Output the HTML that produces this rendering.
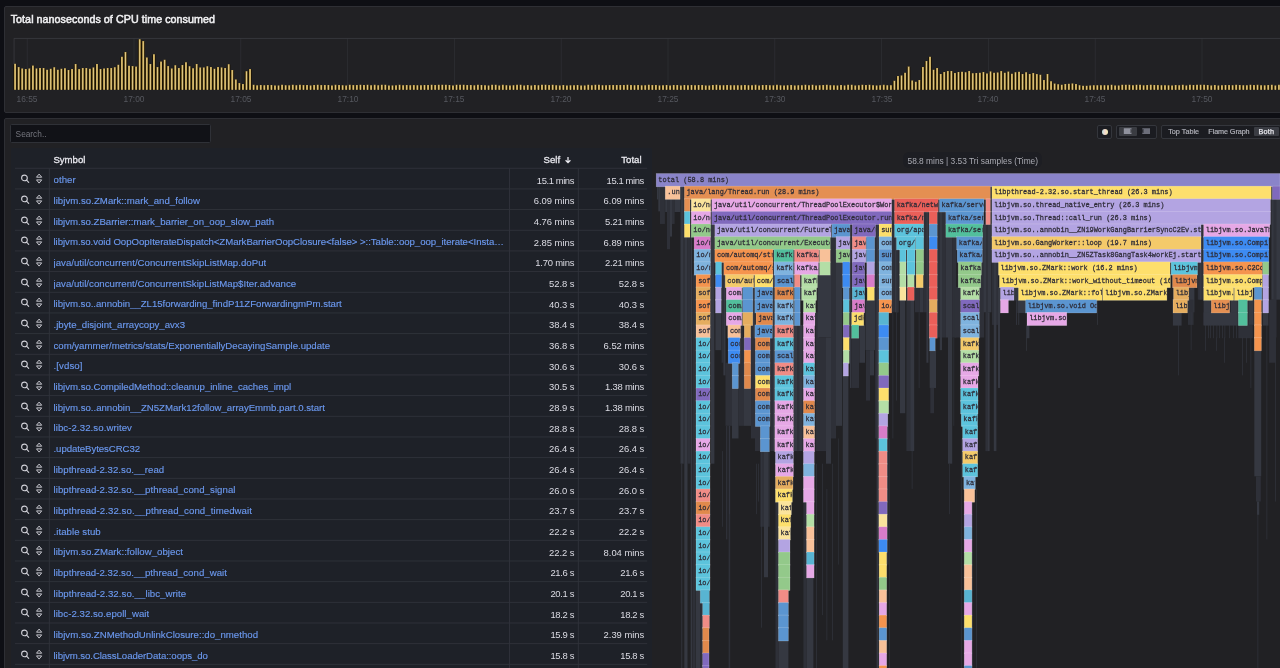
<!DOCTYPE html><html><head><meta charset="utf-8"><title>Pyroscope</title><style>
*{box-sizing:border-box;margin:0;padding:0}
html,body{width:1280px;height:668px;overflow:hidden;background:#0e0f14;font-family:"Liberation Sans",sans-serif;}
#root{position:absolute;left:0;top:0;width:1280px;height:668px;overflow:hidden;will-change:transform}
.abs{position:absolute}
.panel{position:absolute;background:#212124;border:1px solid #2e2f34;border-radius:2px}
.title{position:absolute;left:10.7px;top:12.3px;font-size:10.7px;color:#f1f1f3;letter-spacing:0.06px;white-space:nowrap;line-height:14px;-webkit-text-stroke:0.5px #f1f1f3}
.axl{position:absolute;top:93.6px;font-size:8.5px;color:#56585f;transform:translateX(-50%) scaleX(0.985);white-space:nowrap;line-height:10px}
.tbl{position:absolute;left:10.5px;top:147.5px;width:641.1px;height:521px;background:#1e2128}
.sym{position:absolute;left:53.5px;font-size:9.65px;color:#6b98ee;-webkit-text-stroke:0.15px #6b98ee;white-space:nowrap;line-height:12px;max-width:452px;overflow:hidden;text-overflow:ellipsis}
.num{position:absolute;font-size:9.45px;color:#dcdce4;white-space:nowrap;line-height:12px;text-align:right}
.th{position:absolute;font-size:9.6px;color:#e8e8ee;white-space:nowrap;line-height:12px;-webkit-text-stroke:0.3px #e8e8ee}
.btn{position:absolute;border:1px solid #34363c;border-radius:2px;background:#1b1c21}
.bt{position:absolute;font-size:7.25px;color:#b2b3bb;-webkit-text-stroke:0.18px #b2b3bb;white-space:nowrap;line-height:10px;top:126.75px}
</style></head><body><div id="root">
<div class="panel" style="left:4px;top:6px;width:1290px;height:107px"></div>
<div class="title">Total nanoseconds of CPU time consumed</div>
<svg class="abs" style="left:0;top:0" width="1280" height="112" viewBox="0 0 1280 112"><rect x="26.85" y="38.3" width="0.7" height="51.4" fill="#2f3035"/><rect x="133.65" y="38.3" width="0.7" height="51.4" fill="#2f3035"/><rect x="240.45" y="38.3" width="0.7" height="51.4" fill="#2f3035"/><rect x="347.25" y="38.3" width="0.7" height="51.4" fill="#2f3035"/><rect x="454.05" y="38.3" width="0.7" height="51.4" fill="#2f3035"/><rect x="560.85" y="38.3" width="0.7" height="51.4" fill="#2f3035"/><rect x="667.65" y="38.3" width="0.7" height="51.4" fill="#2f3035"/><rect x="774.45" y="38.3" width="0.7" height="51.4" fill="#2f3035"/><rect x="881.25" y="38.3" width="0.7" height="51.4" fill="#2f3035"/><rect x="988.05" y="38.3" width="0.7" height="51.4" fill="#2f3035"/><rect x="1094.85" y="38.3" width="0.7" height="51.4" fill="#2f3035"/><rect x="1201.65" y="38.3" width="0.7" height="51.4" fill="#2f3035"/><rect x="14.0" y="37.949999999999996" width="1270" height="0.8" fill="#3a3b40"/><rect x="13.65" y="38.3" width="0.8" height="51.4" fill="#3a3b40"/><path d="M13.30 89.7v-25.40h3.5v25.40zM16.86 89.7v-22.10h3.5v22.10zM20.42 89.7v-20.70h3.5v20.70zM23.98 89.7v-20.30h3.5v20.30zM27.54 89.7v-20.70h3.5v20.70zM31.10 89.7v-23.60h3.5v23.60zM34.66 89.7v-20.70h3.5v20.70zM38.22 89.7v-21.20h3.5v21.20zM41.78 89.7v-21.20h3.5v21.20zM45.34 89.7v-19.50h3.5v19.50zM48.90 89.7v-20.40h3.5v20.40zM52.46 89.7v-22.00h3.5v22.00zM56.02 89.7v-19.50h3.5v19.50zM59.58 89.7v-20.40h3.5v20.40zM63.14 89.7v-21.00h3.5v21.00zM66.70 89.7v-19.30h3.5v19.30zM70.26 89.7v-20.30h3.5v20.30zM73.82 89.7v-25.20h3.5v25.20zM77.38 89.7v-20.10h3.5v20.10zM80.94 89.7v-21.20h3.5v21.20zM84.50 89.7v-21.20h3.5v21.20zM88.06 89.7v-20.40h3.5v20.40zM91.62 89.7v-21.70h3.5v21.70zM95.18 89.7v-25.20h3.5v25.20zM98.74 89.7v-20.30h3.5v20.30zM102.30 89.7v-20.70h3.5v20.70zM105.86 89.7v-21.20h3.5v21.20zM109.42 89.7v-21.20h3.5v21.20zM112.98 89.7v-22.00h3.5v22.00zM116.54 89.7v-24.50h3.5v24.50zM120.10 89.7v-32.50h3.5v32.50zM123.66 89.7v-37.20h3.5v37.20zM127.22 89.7v-23.50h3.5v23.50zM130.78 89.7v-23.10h3.5v23.10zM134.34 89.7v-22.60h3.5v22.60zM137.90 89.7v-50.00h3.5v50.00zM141.46 89.7v-48.10h3.5v48.10zM145.02 89.7v-31.80h3.5v31.80zM148.58 89.7v-25.20h3.5v25.20zM152.14 89.7v-34.90h3.5v34.90zM155.70 89.7v-22.10h3.5v22.10zM159.26 89.7v-27.60h3.5v27.60zM162.82 89.7v-29.50h3.5v29.50zM166.38 89.7v-23.10h3.5v23.10zM169.94 89.7v-20.70h3.5v20.70zM173.50 89.7v-24.00h3.5v24.00zM177.06 89.7v-21.20h3.5v21.20zM180.62 89.7v-24.20h3.5v24.20zM184.18 89.7v-27.00h3.5v27.00zM187.74 89.7v-22.90h3.5v22.90zM191.30 89.7v-21.00h3.5v21.00zM194.86 89.7v-25.20h3.5v25.20zM198.42 89.7v-21.70h3.5v21.70zM201.98 89.7v-21.70h3.5v21.70zM205.54 89.7v-22.90h3.5v22.90zM209.10 89.7v-22.30h3.5v22.30zM212.66 89.7v-20.40h3.5v20.40zM216.22 89.7v-22.10h3.5v22.10zM219.78 89.7v-21.70h3.5v21.70zM223.34 89.7v-21.20h3.5v21.20zM226.90 89.7v-25.00h3.5v25.00zM230.46 89.7v-19.30h3.5v19.30zM234.02 89.7v-9.70h3.5v9.70zM237.58 89.7v-6.10h3.5v6.10zM241.14 89.7v-5.20h3.5v5.20zM244.70 89.7v-17.90h3.5v17.90zM248.26 89.7v-20.10h3.5v20.10zM251.82 89.7v-4.40h3.5v4.40zM255.38 89.7v-3.86h3.5v3.86zM258.94 89.7v-4.14h3.5v4.14zM262.50 89.7v-3.98h3.5v3.98zM266.06 89.7v-4.19h3.5v4.19zM269.62 89.7v-4.21h3.5v4.21zM273.18 89.7v-3.71h3.5v3.71zM276.74 89.7v-3.66h3.5v3.66zM280.30 89.7v-4.40h3.5v4.40zM283.86 89.7v-3.88h3.5v3.88zM287.42 89.7v-3.86h3.5v3.86zM290.98 89.7v-4.55h3.5v4.55zM294.54 89.7v-4.07h3.5v4.07zM298.10 89.7v-4.40h3.5v4.40zM301.66 89.7v-4.08h3.5v4.08zM305.22 89.7v-4.23h3.5v4.23zM308.78 89.7v-3.79h3.5v3.79zM312.34 89.7v-4.22h3.5v4.22zM315.90 89.7v-4.43h3.5v4.43zM319.46 89.7v-4.12h3.5v4.12zM323.02 89.7v-4.32h3.5v4.32zM326.58 89.7v-4.25h3.5v4.25zM330.14 89.7v-3.71h3.5v3.71zM333.70 89.7v-4.33h3.5v4.33zM337.26 89.7v-4.18h3.5v4.18zM340.82 89.7v-3.92h3.5v3.92zM344.38 89.7v-3.68h3.5v3.68zM347.94 89.7v-4.43h3.5v4.43zM351.50 89.7v-4.08h3.5v4.08zM355.06 89.7v-4.30h3.5v4.30zM358.62 89.7v-4.44h3.5v4.44zM362.18 89.7v-4.29h3.5v4.29zM365.74 89.7v-4.48h3.5v4.48zM369.30 89.7v-4.01h3.5v4.01zM372.86 89.7v-4.37h3.5v4.37zM376.42 89.7v-4.05h3.5v4.05zM379.98 89.7v-4.49h3.5v4.49zM383.54 89.7v-4.44h3.5v4.44zM387.10 89.7v-3.74h3.5v3.74zM390.66 89.7v-3.77h3.5v3.77zM394.22 89.7v-3.85h3.5v3.85zM397.78 89.7v-4.52h3.5v4.52zM401.34 89.7v-4.04h3.5v4.04zM404.90 89.7v-4.21h3.5v4.21zM408.46 89.7v-3.92h3.5v3.92zM412.02 89.7v-4.11h3.5v4.11zM415.58 89.7v-4.00h3.5v4.00zM419.14 89.7v-3.97h3.5v3.97zM422.70 89.7v-4.18h3.5v4.18zM426.26 89.7v-4.18h3.5v4.18zM429.82 89.7v-4.46h3.5v4.46zM433.38 89.7v-4.26h3.5v4.26zM436.94 89.7v-4.49h3.5v4.49zM440.50 89.7v-4.42h3.5v4.42zM444.06 89.7v-4.54h3.5v4.54zM447.62 89.7v-4.25h3.5v4.25zM451.18 89.7v-3.80h3.5v3.80zM454.74 89.7v-4.42h3.5v4.42zM458.30 89.7v-4.52h3.5v4.52zM461.86 89.7v-4.46h3.5v4.46zM465.42 89.7v-4.16h3.5v4.16zM468.98 89.7v-4.29h3.5v4.29zM472.54 89.7v-3.84h3.5v3.84zM476.10 89.7v-4.40h3.5v4.40zM479.66 89.7v-4.17h3.5v4.17zM483.22 89.7v-3.91h3.5v3.91zM486.78 89.7v-3.71h3.5v3.71zM490.34 89.7v-4.42h3.5v4.42zM493.90 89.7v-4.54h3.5v4.54zM497.46 89.7v-3.73h3.5v3.73zM501.02 89.7v-4.37h3.5v4.37zM504.58 89.7v-4.02h3.5v4.02zM508.14 89.7v-3.79h3.5v3.79zM511.70 89.7v-3.91h3.5v3.91zM515.26 89.7v-4.34h3.5v4.34zM518.82 89.7v-4.44h3.5v4.44zM522.38 89.7v-3.69h3.5v3.69zM525.94 89.7v-4.20h3.5v4.20zM529.50 89.7v-3.69h3.5v3.69zM533.06 89.7v-4.30h3.5v4.30zM536.62 89.7v-3.95h3.5v3.95zM540.18 89.7v-4.44h3.5v4.44zM543.74 89.7v-4.53h3.5v4.53zM547.30 89.7v-4.10h3.5v4.10zM550.86 89.7v-4.55h3.5v4.55zM554.42 89.7v-3.93h3.5v3.93zM557.98 89.7v-3.72h3.5v3.72zM561.54 89.7v-4.19h3.5v4.19zM565.10 89.7v-3.68h3.5v3.68zM568.66 89.7v-3.83h3.5v3.83zM572.22 89.7v-4.02h3.5v4.02zM575.78 89.7v-4.20h3.5v4.20zM579.34 89.7v-3.79h3.5v3.79zM582.90 89.7v-3.69h3.5v3.69zM586.46 89.7v-4.43h3.5v4.43zM590.02 89.7v-3.93h3.5v3.93zM593.58 89.7v-4.51h3.5v4.51zM597.14 89.7v-4.46h3.5v4.46zM600.70 89.7v-3.99h3.5v3.99zM604.26 89.7v-4.06h3.5v4.06zM607.82 89.7v-4.12h3.5v4.12zM611.38 89.7v-4.23h3.5v4.23zM614.94 89.7v-4.19h3.5v4.19zM618.50 89.7v-4.15h3.5v4.15zM622.06 89.7v-4.21h3.5v4.21zM625.62 89.7v-4.50h3.5v4.50zM629.18 89.7v-4.11h3.5v4.11zM632.74 89.7v-4.04h3.5v4.04zM636.30 89.7v-4.30h3.5v4.30zM639.86 89.7v-3.86h3.5v3.86zM643.42 89.7v-3.92h3.5v3.92zM646.98 89.7v-4.53h3.5v4.53zM650.54 89.7v-4.12h3.5v4.12zM654.10 89.7v-4.14h3.5v4.14zM657.66 89.7v-3.66h3.5v3.66zM661.22 89.7v-4.02h3.5v4.02zM664.78 89.7v-4.17h3.5v4.17zM668.34 89.7v-3.67h3.5v3.67zM671.90 89.7v-4.20h3.5v4.20zM675.46 89.7v-4.22h3.5v4.22zM679.02 89.7v-3.70h3.5v3.70zM682.58 89.7v-4.21h3.5v4.21zM686.14 89.7v-4.07h3.5v4.07zM689.70 89.7v-4.26h3.5v4.26zM693.26 89.7v-3.97h3.5v3.97zM696.82 89.7v-4.29h3.5v4.29zM700.38 89.7v-4.31h3.5v4.31zM703.94 89.7v-3.67h3.5v3.67zM707.50 89.7v-3.70h3.5v3.70zM711.06 89.7v-4.26h3.5v4.26zM714.62 89.7v-4.52h3.5v4.52zM718.18 89.7v-3.88h3.5v3.88zM721.74 89.7v-4.06h3.5v4.06zM725.30 89.7v-4.18h3.5v4.18zM728.86 89.7v-3.94h3.5v3.94zM732.42 89.7v-3.98h3.5v3.98zM735.98 89.7v-3.93h3.5v3.93zM739.54 89.7v-3.98h3.5v3.98zM743.10 89.7v-4.19h3.5v4.19zM746.66 89.7v-3.92h3.5v3.92zM750.22 89.7v-3.99h3.5v3.99zM753.78 89.7v-4.35h3.5v4.35zM757.34 89.7v-3.67h3.5v3.67zM760.90 89.7v-4.16h3.5v4.16zM764.46 89.7v-4.31h3.5v4.31zM768.02 89.7v-3.93h3.5v3.93zM771.58 89.7v-3.85h3.5v3.85zM775.14 89.7v-4.37h3.5v4.37zM778.70 89.7v-3.86h3.5v3.86zM782.26 89.7v-3.82h3.5v3.82zM785.82 89.7v-4.04h3.5v4.04zM789.38 89.7v-4.28h3.5v4.28zM792.94 89.7v-3.74h3.5v3.74zM796.50 89.7v-3.94h3.5v3.94zM800.06 89.7v-3.95h3.5v3.95zM803.62 89.7v-4.40h3.5v4.40zM807.18 89.7v-4.04h3.5v4.04zM810.74 89.7v-4.42h3.5v4.42zM814.30 89.7v-3.80h3.5v3.80zM817.86 89.7v-3.95h3.5v3.95zM821.42 89.7v-4.24h3.5v4.24zM824.98 89.7v-4.45h3.5v4.45zM828.54 89.7v-4.06h3.5v4.06zM832.10 89.7v-3.85h3.5v3.85zM835.66 89.7v-3.76h3.5v3.76zM839.22 89.7v-4.13h3.5v4.13zM842.78 89.7v-3.82h3.5v3.82zM846.34 89.7v-4.38h3.5v4.38zM849.90 89.7v-4.40h3.5v4.40zM853.46 89.7v-3.82h3.5v3.82zM857.02 89.7v-3.90h3.5v3.90zM860.58 89.7v-4.38h3.5v4.38zM864.14 89.7v-4.23h3.5v4.23zM867.70 89.7v-4.38h3.5v4.38zM871.26 89.7v-3.96h3.5v3.96zM874.82 89.7v-3.77h3.5v3.77zM878.38 89.7v-3.91h3.5v3.91zM881.94 89.7v-4.36h3.5v4.36zM885.50 89.7v-3.89h3.5v3.89zM889.06 89.7v-3.96h3.5v3.96zM892.62 89.7v-8.50h3.5v8.50zM896.18 89.7v-13.20h3.5v13.20zM899.74 89.7v-13.70h3.5v13.70zM903.30 89.7v-16.50h3.5v16.50zM906.86 89.7v-22.60h3.5v22.60zM910.42 89.7v-8.70h3.5v8.70zM913.98 89.7v-7.50h3.5v7.50zM917.54 89.7v-9.20h3.5v9.20zM921.10 89.7v-22.30h3.5v22.30zM924.66 89.7v-28.30h3.5v28.30zM928.22 89.7v-32.50h3.5v32.50zM931.78 89.7v-19.50h3.5v19.50zM935.34 89.7v-21.20h3.5v21.20zM938.90 89.7v-15.30h3.5v15.30zM942.46 89.7v-17.20h3.5v17.20zM946.02 89.7v-18.20h3.5v18.20zM949.58 89.7v-18.20h3.5v18.20zM953.14 89.7v-16.30h3.5v16.30zM956.70 89.7v-17.20h3.5v17.20zM960.26 89.7v-17.40h3.5v17.40zM963.82 89.7v-17.00h3.5v17.00zM967.38 89.7v-18.20h3.5v18.20zM970.94 89.7v-16.00h3.5v16.00zM974.50 89.7v-16.30h3.5v16.30zM978.06 89.7v-16.50h3.5v16.50zM981.62 89.7v-17.20h3.5v17.20zM985.18 89.7v-15.70h3.5v15.70zM988.74 89.7v-17.70h3.5v17.70zM992.30 89.7v-16.50h3.5v16.50zM995.86 89.7v-16.70h3.5v16.70zM999.42 89.7v-18.10h3.5v18.10zM1002.98 89.7v-16.50h3.5v16.50zM1006.54 89.7v-17.60h3.5v17.60zM1010.10 89.7v-15.50h3.5v15.50zM1013.66 89.7v-17.00h3.5v17.00zM1017.22 89.7v-17.40h3.5v17.40zM1020.78 89.7v-15.30h3.5v15.30zM1024.34 89.7v-17.00h3.5v17.00zM1027.90 89.7v-15.30h3.5v15.30zM1031.46 89.7v-16.30h3.5v16.30zM1035.02 89.7v-15.10h3.5v15.10zM1038.58 89.7v-14.40h3.5v14.40zM1042.14 89.7v-9.20h3.5v9.20zM1045.70 89.7v-15.30h3.5v15.30zM1049.26 89.7v-8.00h3.5v8.00zM1052.82 89.7v-5.60h3.5v5.60zM1056.38 89.7v-5.00h3.5v5.00zM1059.94 89.7v-4.50h3.5v4.50zM1063.50 89.7v-5.20h3.5v5.20zM1067.06 89.7v-5.40h3.5v5.40zM1070.62 89.7v-5.70h3.5v5.70zM1074.18 89.7v-5.20h3.5v5.20zM1077.74 89.7v-4.00h3.5v4.00zM1081.30 89.7v-3.50h3.5v3.50zM1084.86 89.7v-3.50h3.5v3.50zM1088.42 89.7v-3.70h3.5v3.70zM1091.98 89.7v-4.00h3.5v4.00zM1095.54 89.7v-4.00h3.5v4.00zM1099.10 89.7v-4.03h3.5v4.03zM1102.66 89.7v-4.03h3.5v4.03zM1106.22 89.7v-4.02h3.5v4.02zM1109.78 89.7v-4.48h3.5v4.48zM1113.34 89.7v-3.79h3.5v3.79zM1116.90 89.7v-3.65h3.5v3.65zM1120.46 89.7v-4.50h3.5v4.50zM1124.02 89.7v-4.44h3.5v4.44zM1127.58 89.7v-4.54h3.5v4.54zM1131.14 89.7v-4.04h3.5v4.04zM1134.70 89.7v-4.51h3.5v4.51zM1138.26 89.7v-4.48h3.5v4.48zM1141.82 89.7v-3.85h3.5v3.85zM1145.38 89.7v-4.32h3.5v4.32zM1148.94 89.7v-4.40h3.5v4.40zM1152.50 89.7v-4.25h3.5v4.25zM1156.06 89.7v-4.12h3.5v4.12zM1159.62 89.7v-3.91h3.5v3.91zM1163.18 89.7v-3.96h3.5v3.96zM1166.74 89.7v-3.85h3.5v3.85zM1170.30 89.7v-3.71h3.5v3.71zM1173.86 89.7v-4.18h3.5v4.18zM1177.42 89.7v-3.91h3.5v3.91zM1180.98 89.7v-4.38h3.5v4.38zM1184.54 89.7v-3.69h3.5v3.69zM1188.10 89.7v-4.46h3.5v4.46zM1191.66 89.7v-4.27h3.5v4.27zM1195.22 89.7v-4.48h3.5v4.48zM1198.78 89.7v-4.46h3.5v4.46zM1202.34 89.7v-4.46h3.5v4.46zM1205.90 89.7v-4.17h3.5v4.17zM1209.46 89.7v-3.66h3.5v3.66zM1213.02 89.7v-4.32h3.5v4.32zM1216.58 89.7v-3.80h3.5v3.80zM1220.14 89.7v-3.92h3.5v3.92zM1223.70 89.7v-4.25h3.5v4.25zM1227.26 89.7v-4.12h3.5v4.12zM1230.82 89.7v-4.02h3.5v4.02zM1234.38 89.7v-4.50h3.5v4.50zM1237.94 89.7v-4.20h3.5v4.20zM1241.50 89.7v-3.96h3.5v3.96zM1245.06 89.7v-3.88h3.5v3.88zM1248.62 89.7v-4.43h3.5v4.43zM1252.18 89.7v-4.08h3.5v4.08zM1255.74 89.7v-4.35h3.5v4.35zM1259.30 89.7v-3.97h3.5v3.97zM1262.86 89.7v-3.83h3.5v3.83zM1266.42 89.7v-4.13h3.5v4.13zM1269.98 89.7v-4.39h3.5v4.39zM1273.54 89.7v-3.80h3.5v3.80zM1277.10 89.7v-4.36h3.5v4.36zM1280.66 89.7v-4.48h3.5v4.48z" fill="#171003"/><path d="M14.15 89.7v-25.90h1.9v25.90zM17.71 89.7v-22.60h1.9v22.60zM21.27 89.7v-21.20h1.9v21.20zM24.83 89.7v-20.80h1.9v20.80zM28.39 89.7v-21.20h1.9v21.20zM31.95 89.7v-24.10h1.9v24.10zM35.51 89.7v-21.20h1.9v21.20zM39.07 89.7v-21.70h1.9v21.70zM42.63 89.7v-21.70h1.9v21.70zM46.19 89.7v-20.00h1.9v20.00zM49.75 89.7v-20.90h1.9v20.90zM53.31 89.7v-22.50h1.9v22.50zM56.87 89.7v-20.00h1.9v20.00zM60.43 89.7v-20.90h1.9v20.90zM63.99 89.7v-21.50h1.9v21.50zM67.55 89.7v-19.80h1.9v19.80zM71.11 89.7v-20.80h1.9v20.80zM74.67 89.7v-25.70h1.9v25.70zM78.23 89.7v-20.60h1.9v20.60zM81.79 89.7v-21.70h1.9v21.70zM85.35 89.7v-21.70h1.9v21.70zM88.91 89.7v-20.90h1.9v20.90zM92.47 89.7v-22.20h1.9v22.20zM96.03 89.7v-25.70h1.9v25.70zM99.59 89.7v-20.80h1.9v20.80zM103.15 89.7v-21.20h1.9v21.20zM106.71 89.7v-21.70h1.9v21.70zM110.27 89.7v-21.70h1.9v21.70zM113.83 89.7v-22.50h1.9v22.50zM117.39 89.7v-25.00h1.9v25.00zM120.95 89.7v-33.00h1.9v33.00zM124.51 89.7v-37.70h1.9v37.70zM128.07 89.7v-24.00h1.9v24.00zM131.63 89.7v-23.60h1.9v23.60zM135.19 89.7v-23.10h1.9v23.10zM138.75 89.7v-50.50h1.9v50.50zM142.31 89.7v-48.60h1.9v48.60zM145.87 89.7v-32.30h1.9v32.30zM149.43 89.7v-25.70h1.9v25.70zM152.99 89.7v-35.40h1.9v35.40zM156.55 89.7v-22.60h1.9v22.60zM160.11 89.7v-28.10h1.9v28.10zM163.67 89.7v-30.00h1.9v30.00zM167.23 89.7v-23.60h1.9v23.60zM170.79 89.7v-21.20h1.9v21.20zM174.35 89.7v-24.50h1.9v24.50zM177.91 89.7v-21.70h1.9v21.70zM181.47 89.7v-24.70h1.9v24.70zM185.03 89.7v-27.50h1.9v27.50zM188.59 89.7v-23.40h1.9v23.40zM192.15 89.7v-21.50h1.9v21.50zM195.71 89.7v-25.70h1.9v25.70zM199.27 89.7v-22.20h1.9v22.20zM202.83 89.7v-22.20h1.9v22.20zM206.39 89.7v-23.40h1.9v23.40zM209.95 89.7v-22.80h1.9v22.80zM213.51 89.7v-20.90h1.9v20.90zM217.07 89.7v-22.60h1.9v22.60zM220.63 89.7v-22.20h1.9v22.20zM224.19 89.7v-21.70h1.9v21.70zM227.75 89.7v-25.50h1.9v25.50zM231.31 89.7v-19.80h1.9v19.80zM234.87 89.7v-10.20h1.9v10.20zM238.43 89.7v-6.60h1.9v6.60zM241.99 89.7v-5.70h1.9v5.70zM245.55 89.7v-18.40h1.9v18.40zM249.11 89.7v-20.60h1.9v20.60zM252.67 89.7v-4.90h1.9v4.90zM256.23 89.7v-4.36h1.9v4.36zM259.79 89.7v-4.64h1.9v4.64zM263.35 89.7v-4.48h1.9v4.48zM266.91 89.7v-4.69h1.9v4.69zM270.47 89.7v-4.71h1.9v4.71zM274.03 89.7v-4.21h1.9v4.21zM277.59 89.7v-4.16h1.9v4.16zM281.15 89.7v-4.90h1.9v4.90zM284.71 89.7v-4.38h1.9v4.38zM288.27 89.7v-4.36h1.9v4.36zM291.83 89.7v-5.05h1.9v5.05zM295.39 89.7v-4.57h1.9v4.57zM298.95 89.7v-4.90h1.9v4.90zM302.51 89.7v-4.58h1.9v4.58zM306.07 89.7v-4.73h1.9v4.73zM309.63 89.7v-4.29h1.9v4.29zM313.19 89.7v-4.72h1.9v4.72zM316.75 89.7v-4.93h1.9v4.93zM320.31 89.7v-4.62h1.9v4.62zM323.87 89.7v-4.82h1.9v4.82zM327.43 89.7v-4.75h1.9v4.75zM330.99 89.7v-4.21h1.9v4.21zM334.55 89.7v-4.83h1.9v4.83zM338.11 89.7v-4.68h1.9v4.68zM341.67 89.7v-4.42h1.9v4.42zM345.23 89.7v-4.18h1.9v4.18zM348.79 89.7v-4.93h1.9v4.93zM352.35 89.7v-4.58h1.9v4.58zM355.91 89.7v-4.80h1.9v4.80zM359.47 89.7v-4.94h1.9v4.94zM363.03 89.7v-4.79h1.9v4.79zM366.59 89.7v-4.98h1.9v4.98zM370.15 89.7v-4.51h1.9v4.51zM373.71 89.7v-4.87h1.9v4.87zM377.27 89.7v-4.55h1.9v4.55zM380.83 89.7v-4.99h1.9v4.99zM384.39 89.7v-4.94h1.9v4.94zM387.95 89.7v-4.24h1.9v4.24zM391.51 89.7v-4.27h1.9v4.27zM395.07 89.7v-4.35h1.9v4.35zM398.63 89.7v-5.02h1.9v5.02zM402.19 89.7v-4.54h1.9v4.54zM405.75 89.7v-4.71h1.9v4.71zM409.31 89.7v-4.42h1.9v4.42zM412.87 89.7v-4.61h1.9v4.61zM416.43 89.7v-4.50h1.9v4.50zM419.99 89.7v-4.47h1.9v4.47zM423.55 89.7v-4.68h1.9v4.68zM427.11 89.7v-4.68h1.9v4.68zM430.67 89.7v-4.96h1.9v4.96zM434.23 89.7v-4.76h1.9v4.76zM437.79 89.7v-4.99h1.9v4.99zM441.35 89.7v-4.92h1.9v4.92zM444.91 89.7v-5.04h1.9v5.04zM448.47 89.7v-4.75h1.9v4.75zM452.03 89.7v-4.30h1.9v4.30zM455.59 89.7v-4.92h1.9v4.92zM459.15 89.7v-5.02h1.9v5.02zM462.71 89.7v-4.96h1.9v4.96zM466.27 89.7v-4.66h1.9v4.66zM469.83 89.7v-4.79h1.9v4.79zM473.39 89.7v-4.34h1.9v4.34zM476.95 89.7v-4.90h1.9v4.90zM480.51 89.7v-4.67h1.9v4.67zM484.07 89.7v-4.41h1.9v4.41zM487.63 89.7v-4.21h1.9v4.21zM491.19 89.7v-4.92h1.9v4.92zM494.75 89.7v-5.04h1.9v5.04zM498.31 89.7v-4.23h1.9v4.23zM501.87 89.7v-4.87h1.9v4.87zM505.43 89.7v-4.52h1.9v4.52zM508.99 89.7v-4.29h1.9v4.29zM512.55 89.7v-4.41h1.9v4.41zM516.11 89.7v-4.84h1.9v4.84zM519.67 89.7v-4.94h1.9v4.94zM523.23 89.7v-4.19h1.9v4.19zM526.79 89.7v-4.70h1.9v4.70zM530.35 89.7v-4.19h1.9v4.19zM533.91 89.7v-4.80h1.9v4.80zM537.47 89.7v-4.45h1.9v4.45zM541.03 89.7v-4.94h1.9v4.94zM544.59 89.7v-5.03h1.9v5.03zM548.15 89.7v-4.60h1.9v4.60zM551.71 89.7v-5.05h1.9v5.05zM555.27 89.7v-4.43h1.9v4.43zM558.83 89.7v-4.22h1.9v4.22zM562.39 89.7v-4.69h1.9v4.69zM565.95 89.7v-4.18h1.9v4.18zM569.51 89.7v-4.33h1.9v4.33zM573.07 89.7v-4.52h1.9v4.52zM576.63 89.7v-4.70h1.9v4.70zM580.19 89.7v-4.29h1.9v4.29zM583.75 89.7v-4.19h1.9v4.19zM587.31 89.7v-4.93h1.9v4.93zM590.87 89.7v-4.43h1.9v4.43zM594.43 89.7v-5.01h1.9v5.01zM597.99 89.7v-4.96h1.9v4.96zM601.55 89.7v-4.49h1.9v4.49zM605.11 89.7v-4.56h1.9v4.56zM608.67 89.7v-4.62h1.9v4.62zM612.23 89.7v-4.73h1.9v4.73zM615.79 89.7v-4.69h1.9v4.69zM619.35 89.7v-4.65h1.9v4.65zM622.91 89.7v-4.71h1.9v4.71zM626.47 89.7v-5.00h1.9v5.00zM630.03 89.7v-4.61h1.9v4.61zM633.59 89.7v-4.54h1.9v4.54zM637.15 89.7v-4.80h1.9v4.80zM640.71 89.7v-4.36h1.9v4.36zM644.27 89.7v-4.42h1.9v4.42zM647.83 89.7v-5.03h1.9v5.03zM651.39 89.7v-4.62h1.9v4.62zM654.95 89.7v-4.64h1.9v4.64zM658.51 89.7v-4.16h1.9v4.16zM662.07 89.7v-4.52h1.9v4.52zM665.63 89.7v-4.67h1.9v4.67zM669.19 89.7v-4.17h1.9v4.17zM672.75 89.7v-4.70h1.9v4.70zM676.31 89.7v-4.72h1.9v4.72zM679.87 89.7v-4.20h1.9v4.20zM683.43 89.7v-4.71h1.9v4.71zM686.99 89.7v-4.57h1.9v4.57zM690.55 89.7v-4.76h1.9v4.76zM694.11 89.7v-4.47h1.9v4.47zM697.67 89.7v-4.79h1.9v4.79zM701.23 89.7v-4.81h1.9v4.81zM704.79 89.7v-4.17h1.9v4.17zM708.35 89.7v-4.20h1.9v4.20zM711.91 89.7v-4.76h1.9v4.76zM715.47 89.7v-5.02h1.9v5.02zM719.03 89.7v-4.38h1.9v4.38zM722.59 89.7v-4.56h1.9v4.56zM726.15 89.7v-4.68h1.9v4.68zM729.71 89.7v-4.44h1.9v4.44zM733.27 89.7v-4.48h1.9v4.48zM736.83 89.7v-4.43h1.9v4.43zM740.39 89.7v-4.48h1.9v4.48zM743.95 89.7v-4.69h1.9v4.69zM747.51 89.7v-4.42h1.9v4.42zM751.07 89.7v-4.49h1.9v4.49zM754.63 89.7v-4.85h1.9v4.85zM758.19 89.7v-4.17h1.9v4.17zM761.75 89.7v-4.66h1.9v4.66zM765.31 89.7v-4.81h1.9v4.81zM768.87 89.7v-4.43h1.9v4.43zM772.43 89.7v-4.35h1.9v4.35zM775.99 89.7v-4.87h1.9v4.87zM779.55 89.7v-4.36h1.9v4.36zM783.11 89.7v-4.32h1.9v4.32zM786.67 89.7v-4.54h1.9v4.54zM790.23 89.7v-4.78h1.9v4.78zM793.79 89.7v-4.24h1.9v4.24zM797.35 89.7v-4.44h1.9v4.44zM800.91 89.7v-4.45h1.9v4.45zM804.47 89.7v-4.90h1.9v4.90zM808.03 89.7v-4.54h1.9v4.54zM811.59 89.7v-4.92h1.9v4.92zM815.15 89.7v-4.30h1.9v4.30zM818.71 89.7v-4.45h1.9v4.45zM822.27 89.7v-4.74h1.9v4.74zM825.83 89.7v-4.95h1.9v4.95zM829.39 89.7v-4.56h1.9v4.56zM832.95 89.7v-4.35h1.9v4.35zM836.51 89.7v-4.26h1.9v4.26zM840.07 89.7v-4.63h1.9v4.63zM843.63 89.7v-4.32h1.9v4.32zM847.19 89.7v-4.88h1.9v4.88zM850.75 89.7v-4.90h1.9v4.90zM854.31 89.7v-4.32h1.9v4.32zM857.87 89.7v-4.40h1.9v4.40zM861.43 89.7v-4.88h1.9v4.88zM864.99 89.7v-4.73h1.9v4.73zM868.55 89.7v-4.88h1.9v4.88zM872.11 89.7v-4.46h1.9v4.46zM875.67 89.7v-4.27h1.9v4.27zM879.23 89.7v-4.41h1.9v4.41zM882.79 89.7v-4.86h1.9v4.86zM886.35 89.7v-4.39h1.9v4.39zM889.91 89.7v-4.46h1.9v4.46zM893.47 89.7v-9.00h1.9v9.00zM897.03 89.7v-13.70h1.9v13.70zM900.59 89.7v-14.20h1.9v14.20zM904.15 89.7v-17.00h1.9v17.00zM907.71 89.7v-23.10h1.9v23.10zM911.27 89.7v-9.20h1.9v9.20zM914.83 89.7v-8.00h1.9v8.00zM918.39 89.7v-9.70h1.9v9.70zM921.95 89.7v-22.80h1.9v22.80zM925.51 89.7v-28.80h1.9v28.80zM929.07 89.7v-33.00h1.9v33.00zM932.63 89.7v-20.00h1.9v20.00zM936.19 89.7v-21.70h1.9v21.70zM939.75 89.7v-15.80h1.9v15.80zM943.31 89.7v-17.70h1.9v17.70zM946.87 89.7v-18.70h1.9v18.70zM950.43 89.7v-18.70h1.9v18.70zM953.99 89.7v-16.80h1.9v16.80zM957.55 89.7v-17.70h1.9v17.70zM961.11 89.7v-17.90h1.9v17.90zM964.67 89.7v-17.50h1.9v17.50zM968.23 89.7v-18.70h1.9v18.70zM971.79 89.7v-16.50h1.9v16.50zM975.35 89.7v-16.80h1.9v16.80zM978.91 89.7v-17.00h1.9v17.00zM982.47 89.7v-17.70h1.9v17.70zM986.03 89.7v-16.20h1.9v16.20zM989.59 89.7v-18.20h1.9v18.20zM993.15 89.7v-17.00h1.9v17.00zM996.71 89.7v-17.20h1.9v17.20zM1000.27 89.7v-18.60h1.9v18.60zM1003.83 89.7v-17.00h1.9v17.00zM1007.39 89.7v-18.10h1.9v18.10zM1010.95 89.7v-16.00h1.9v16.00zM1014.51 89.7v-17.50h1.9v17.50zM1018.07 89.7v-17.90h1.9v17.90zM1021.63 89.7v-15.80h1.9v15.80zM1025.19 89.7v-17.50h1.9v17.50zM1028.75 89.7v-15.80h1.9v15.80zM1032.31 89.7v-16.80h1.9v16.80zM1035.87 89.7v-15.60h1.9v15.60zM1039.43 89.7v-14.90h1.9v14.90zM1042.99 89.7v-9.70h1.9v9.70zM1046.55 89.7v-15.80h1.9v15.80zM1050.11 89.7v-8.50h1.9v8.50zM1053.67 89.7v-6.10h1.9v6.10zM1057.23 89.7v-5.50h1.9v5.50zM1060.79 89.7v-5.00h1.9v5.00zM1064.35 89.7v-5.70h1.9v5.70zM1067.91 89.7v-5.90h1.9v5.90zM1071.47 89.7v-6.20h1.9v6.20zM1075.03 89.7v-5.70h1.9v5.70zM1078.59 89.7v-4.50h1.9v4.50zM1082.15 89.7v-4.00h1.9v4.00zM1085.71 89.7v-4.00h1.9v4.00zM1089.27 89.7v-4.20h1.9v4.20zM1092.83 89.7v-4.50h1.9v4.50zM1096.39 89.7v-4.50h1.9v4.50zM1099.95 89.7v-4.53h1.9v4.53zM1103.51 89.7v-4.53h1.9v4.53zM1107.07 89.7v-4.52h1.9v4.52zM1110.63 89.7v-4.98h1.9v4.98zM1114.19 89.7v-4.29h1.9v4.29zM1117.75 89.7v-4.15h1.9v4.15zM1121.31 89.7v-5.00h1.9v5.00zM1124.87 89.7v-4.94h1.9v4.94zM1128.43 89.7v-5.04h1.9v5.04zM1131.99 89.7v-4.54h1.9v4.54zM1135.55 89.7v-5.01h1.9v5.01zM1139.11 89.7v-4.98h1.9v4.98zM1142.67 89.7v-4.35h1.9v4.35zM1146.23 89.7v-4.82h1.9v4.82zM1149.79 89.7v-4.90h1.9v4.90zM1153.35 89.7v-4.75h1.9v4.75zM1156.91 89.7v-4.62h1.9v4.62zM1160.47 89.7v-4.41h1.9v4.41zM1164.03 89.7v-4.46h1.9v4.46zM1167.59 89.7v-4.35h1.9v4.35zM1171.15 89.7v-4.21h1.9v4.21zM1174.71 89.7v-4.68h1.9v4.68zM1178.27 89.7v-4.41h1.9v4.41zM1181.83 89.7v-4.88h1.9v4.88zM1185.39 89.7v-4.19h1.9v4.19zM1188.95 89.7v-4.96h1.9v4.96zM1192.51 89.7v-4.77h1.9v4.77zM1196.07 89.7v-4.98h1.9v4.98zM1199.63 89.7v-4.96h1.9v4.96zM1203.19 89.7v-4.96h1.9v4.96zM1206.75 89.7v-4.67h1.9v4.67zM1210.31 89.7v-4.16h1.9v4.16zM1213.87 89.7v-4.82h1.9v4.82zM1217.43 89.7v-4.30h1.9v4.30zM1220.99 89.7v-4.42h1.9v4.42zM1224.55 89.7v-4.75h1.9v4.75zM1228.11 89.7v-4.62h1.9v4.62zM1231.67 89.7v-4.52h1.9v4.52zM1235.23 89.7v-5.00h1.9v5.00zM1238.79 89.7v-4.70h1.9v4.70zM1242.35 89.7v-4.46h1.9v4.46zM1245.91 89.7v-4.38h1.9v4.38zM1249.47 89.7v-4.93h1.9v4.93zM1253.03 89.7v-4.58h1.9v4.58zM1256.59 89.7v-4.85h1.9v4.85zM1260.15 89.7v-4.47h1.9v4.47zM1263.71 89.7v-4.33h1.9v4.33zM1267.27 89.7v-4.63h1.9v4.63zM1270.83 89.7v-4.89h1.9v4.89zM1274.39 89.7v-4.30h1.9v4.30zM1277.95 89.7v-4.86h1.9v4.86zM1281.51 89.7v-4.98h1.9v4.98z" fill="#bf9c43"/><path d="M14.65 89.7v-25.60h0.9v25.60zM18.21 89.7v-22.30h0.9v22.30zM21.77 89.7v-20.90h0.9v20.90zM25.33 89.7v-20.50h0.9v20.50zM28.89 89.7v-20.90h0.9v20.90zM32.45 89.7v-23.80h0.9v23.80zM36.01 89.7v-20.90h0.9v20.90zM39.57 89.7v-21.40h0.9v21.40zM43.13 89.7v-21.40h0.9v21.40zM46.69 89.7v-19.70h0.9v19.70zM50.25 89.7v-20.60h0.9v20.60zM53.81 89.7v-22.20h0.9v22.20zM57.37 89.7v-19.70h0.9v19.70zM60.93 89.7v-20.60h0.9v20.60zM64.49 89.7v-21.20h0.9v21.20zM68.05 89.7v-19.50h0.9v19.50zM71.61 89.7v-20.50h0.9v20.50zM75.17 89.7v-25.40h0.9v25.40zM78.73 89.7v-20.30h0.9v20.30zM82.29 89.7v-21.40h0.9v21.40zM85.85 89.7v-21.40h0.9v21.40zM89.41 89.7v-20.60h0.9v20.60zM92.97 89.7v-21.90h0.9v21.90zM96.53 89.7v-25.40h0.9v25.40zM100.09 89.7v-20.50h0.9v20.50zM103.65 89.7v-20.90h0.9v20.90zM107.21 89.7v-21.40h0.9v21.40zM110.77 89.7v-21.40h0.9v21.40zM114.33 89.7v-22.20h0.9v22.20zM117.89 89.7v-24.70h0.9v24.70zM121.45 89.7v-32.70h0.9v32.70zM125.01 89.7v-37.40h0.9v37.40zM128.57 89.7v-23.70h0.9v23.70zM132.13 89.7v-23.30h0.9v23.30zM135.69 89.7v-22.80h0.9v22.80zM139.25 89.7v-50.20h0.9v50.20zM142.81 89.7v-48.30h0.9v48.30zM146.37 89.7v-32.00h0.9v32.00zM149.93 89.7v-25.40h0.9v25.40zM153.49 89.7v-35.10h0.9v35.10zM157.05 89.7v-22.30h0.9v22.30zM160.61 89.7v-27.80h0.9v27.80zM164.17 89.7v-29.70h0.9v29.70zM167.73 89.7v-23.30h0.9v23.30zM171.29 89.7v-20.90h0.9v20.90zM174.85 89.7v-24.20h0.9v24.20zM178.41 89.7v-21.40h0.9v21.40zM181.97 89.7v-24.40h0.9v24.40zM185.53 89.7v-27.20h0.9v27.20zM189.09 89.7v-23.10h0.9v23.10zM192.65 89.7v-21.20h0.9v21.20zM196.21 89.7v-25.40h0.9v25.40zM199.77 89.7v-21.90h0.9v21.90zM203.33 89.7v-21.90h0.9v21.90zM206.89 89.7v-23.10h0.9v23.10zM210.45 89.7v-22.50h0.9v22.50zM214.01 89.7v-20.60h0.9v20.60zM217.57 89.7v-22.30h0.9v22.30zM221.13 89.7v-21.90h0.9v21.90zM224.69 89.7v-21.40h0.9v21.40zM228.25 89.7v-25.20h0.9v25.20zM231.81 89.7v-19.50h0.9v19.50zM235.37 89.7v-9.90h0.9v9.90zM238.93 89.7v-6.30h0.9v6.30zM242.49 89.7v-5.40h0.9v5.40zM246.05 89.7v-18.10h0.9v18.10zM249.61 89.7v-20.30h0.9v20.30zM253.17 89.7v-4.60h0.9v4.60zM256.73 89.7v-4.06h0.9v4.06zM260.29 89.7v-4.34h0.9v4.34zM263.85 89.7v-4.18h0.9v4.18zM267.41 89.7v-4.39h0.9v4.39zM270.97 89.7v-4.41h0.9v4.41zM274.53 89.7v-3.91h0.9v3.91zM278.09 89.7v-3.86h0.9v3.86zM281.65 89.7v-4.60h0.9v4.60zM285.21 89.7v-4.08h0.9v4.08zM288.77 89.7v-4.06h0.9v4.06zM292.33 89.7v-4.75h0.9v4.75zM295.89 89.7v-4.27h0.9v4.27zM299.45 89.7v-4.60h0.9v4.60zM303.01 89.7v-4.28h0.9v4.28zM306.57 89.7v-4.43h0.9v4.43zM310.13 89.7v-3.99h0.9v3.99zM313.69 89.7v-4.42h0.9v4.42zM317.25 89.7v-4.63h0.9v4.63zM320.81 89.7v-4.32h0.9v4.32zM324.37 89.7v-4.52h0.9v4.52zM327.93 89.7v-4.45h0.9v4.45zM331.49 89.7v-3.91h0.9v3.91zM335.05 89.7v-4.53h0.9v4.53zM338.61 89.7v-4.38h0.9v4.38zM342.17 89.7v-4.12h0.9v4.12zM345.73 89.7v-3.88h0.9v3.88zM349.29 89.7v-4.63h0.9v4.63zM352.85 89.7v-4.28h0.9v4.28zM356.41 89.7v-4.50h0.9v4.50zM359.97 89.7v-4.64h0.9v4.64zM363.53 89.7v-4.49h0.9v4.49zM367.09 89.7v-4.68h0.9v4.68zM370.65 89.7v-4.21h0.9v4.21zM374.21 89.7v-4.57h0.9v4.57zM377.77 89.7v-4.25h0.9v4.25zM381.33 89.7v-4.69h0.9v4.69zM384.89 89.7v-4.64h0.9v4.64zM388.45 89.7v-3.94h0.9v3.94zM392.01 89.7v-3.97h0.9v3.97zM395.57 89.7v-4.05h0.9v4.05zM399.13 89.7v-4.72h0.9v4.72zM402.69 89.7v-4.24h0.9v4.24zM406.25 89.7v-4.41h0.9v4.41zM409.81 89.7v-4.12h0.9v4.12zM413.37 89.7v-4.31h0.9v4.31zM416.93 89.7v-4.20h0.9v4.20zM420.49 89.7v-4.17h0.9v4.17zM424.05 89.7v-4.38h0.9v4.38zM427.61 89.7v-4.38h0.9v4.38zM431.17 89.7v-4.66h0.9v4.66zM434.73 89.7v-4.46h0.9v4.46zM438.29 89.7v-4.69h0.9v4.69zM441.85 89.7v-4.62h0.9v4.62zM445.41 89.7v-4.74h0.9v4.74zM448.97 89.7v-4.45h0.9v4.45zM452.53 89.7v-4.00h0.9v4.00zM456.09 89.7v-4.62h0.9v4.62zM459.65 89.7v-4.72h0.9v4.72zM463.21 89.7v-4.66h0.9v4.66zM466.77 89.7v-4.36h0.9v4.36zM470.33 89.7v-4.49h0.9v4.49zM473.89 89.7v-4.04h0.9v4.04zM477.45 89.7v-4.60h0.9v4.60zM481.01 89.7v-4.37h0.9v4.37zM484.57 89.7v-4.11h0.9v4.11zM488.13 89.7v-3.91h0.9v3.91zM491.69 89.7v-4.62h0.9v4.62zM495.25 89.7v-4.74h0.9v4.74zM498.81 89.7v-3.93h0.9v3.93zM502.37 89.7v-4.57h0.9v4.57zM505.93 89.7v-4.22h0.9v4.22zM509.49 89.7v-3.99h0.9v3.99zM513.05 89.7v-4.11h0.9v4.11zM516.61 89.7v-4.54h0.9v4.54zM520.17 89.7v-4.64h0.9v4.64zM523.73 89.7v-3.89h0.9v3.89zM527.29 89.7v-4.40h0.9v4.40zM530.85 89.7v-3.89h0.9v3.89zM534.41 89.7v-4.50h0.9v4.50zM537.97 89.7v-4.15h0.9v4.15zM541.53 89.7v-4.64h0.9v4.64zM545.09 89.7v-4.73h0.9v4.73zM548.65 89.7v-4.30h0.9v4.30zM552.21 89.7v-4.75h0.9v4.75zM555.77 89.7v-4.13h0.9v4.13zM559.33 89.7v-3.92h0.9v3.92zM562.89 89.7v-4.39h0.9v4.39zM566.45 89.7v-3.88h0.9v3.88zM570.01 89.7v-4.03h0.9v4.03zM573.57 89.7v-4.22h0.9v4.22zM577.13 89.7v-4.40h0.9v4.40zM580.69 89.7v-3.99h0.9v3.99zM584.25 89.7v-3.89h0.9v3.89zM587.81 89.7v-4.63h0.9v4.63zM591.37 89.7v-4.13h0.9v4.13zM594.93 89.7v-4.71h0.9v4.71zM598.49 89.7v-4.66h0.9v4.66zM602.05 89.7v-4.19h0.9v4.19zM605.61 89.7v-4.26h0.9v4.26zM609.17 89.7v-4.32h0.9v4.32zM612.73 89.7v-4.43h0.9v4.43zM616.29 89.7v-4.39h0.9v4.39zM619.85 89.7v-4.35h0.9v4.35zM623.41 89.7v-4.41h0.9v4.41zM626.97 89.7v-4.70h0.9v4.70zM630.53 89.7v-4.31h0.9v4.31zM634.09 89.7v-4.24h0.9v4.24zM637.65 89.7v-4.50h0.9v4.50zM641.21 89.7v-4.06h0.9v4.06zM644.77 89.7v-4.12h0.9v4.12zM648.33 89.7v-4.73h0.9v4.73zM651.89 89.7v-4.32h0.9v4.32zM655.45 89.7v-4.34h0.9v4.34zM659.01 89.7v-3.86h0.9v3.86zM662.57 89.7v-4.22h0.9v4.22zM666.13 89.7v-4.37h0.9v4.37zM669.69 89.7v-3.87h0.9v3.87zM673.25 89.7v-4.40h0.9v4.40zM676.81 89.7v-4.42h0.9v4.42zM680.37 89.7v-3.90h0.9v3.90zM683.93 89.7v-4.41h0.9v4.41zM687.49 89.7v-4.27h0.9v4.27zM691.05 89.7v-4.46h0.9v4.46zM694.61 89.7v-4.17h0.9v4.17zM698.17 89.7v-4.49h0.9v4.49zM701.73 89.7v-4.51h0.9v4.51zM705.29 89.7v-3.87h0.9v3.87zM708.85 89.7v-3.90h0.9v3.90zM712.41 89.7v-4.46h0.9v4.46zM715.97 89.7v-4.72h0.9v4.72zM719.53 89.7v-4.08h0.9v4.08zM723.09 89.7v-4.26h0.9v4.26zM726.65 89.7v-4.38h0.9v4.38zM730.21 89.7v-4.14h0.9v4.14zM733.77 89.7v-4.18h0.9v4.18zM737.33 89.7v-4.13h0.9v4.13zM740.89 89.7v-4.18h0.9v4.18zM744.45 89.7v-4.39h0.9v4.39zM748.01 89.7v-4.12h0.9v4.12zM751.57 89.7v-4.19h0.9v4.19zM755.13 89.7v-4.55h0.9v4.55zM758.69 89.7v-3.87h0.9v3.87zM762.25 89.7v-4.36h0.9v4.36zM765.81 89.7v-4.51h0.9v4.51zM769.37 89.7v-4.13h0.9v4.13zM772.93 89.7v-4.05h0.9v4.05zM776.49 89.7v-4.57h0.9v4.57zM780.05 89.7v-4.06h0.9v4.06zM783.61 89.7v-4.02h0.9v4.02zM787.17 89.7v-4.24h0.9v4.24zM790.73 89.7v-4.48h0.9v4.48zM794.29 89.7v-3.94h0.9v3.94zM797.85 89.7v-4.14h0.9v4.14zM801.41 89.7v-4.15h0.9v4.15zM804.97 89.7v-4.60h0.9v4.60zM808.53 89.7v-4.24h0.9v4.24zM812.09 89.7v-4.62h0.9v4.62zM815.65 89.7v-4.00h0.9v4.00zM819.21 89.7v-4.15h0.9v4.15zM822.77 89.7v-4.44h0.9v4.44zM826.33 89.7v-4.65h0.9v4.65zM829.89 89.7v-4.26h0.9v4.26zM833.45 89.7v-4.05h0.9v4.05zM837.01 89.7v-3.96h0.9v3.96zM840.57 89.7v-4.33h0.9v4.33zM844.13 89.7v-4.02h0.9v4.02zM847.69 89.7v-4.58h0.9v4.58zM851.25 89.7v-4.60h0.9v4.60zM854.81 89.7v-4.02h0.9v4.02zM858.37 89.7v-4.10h0.9v4.10zM861.93 89.7v-4.58h0.9v4.58zM865.49 89.7v-4.43h0.9v4.43zM869.05 89.7v-4.58h0.9v4.58zM872.61 89.7v-4.16h0.9v4.16zM876.17 89.7v-3.97h0.9v3.97zM879.73 89.7v-4.11h0.9v4.11zM883.29 89.7v-4.56h0.9v4.56zM886.85 89.7v-4.09h0.9v4.09zM890.41 89.7v-4.16h0.9v4.16zM893.97 89.7v-8.70h0.9v8.70zM897.53 89.7v-13.40h0.9v13.40zM901.09 89.7v-13.90h0.9v13.90zM904.65 89.7v-16.70h0.9v16.70zM908.21 89.7v-22.80h0.9v22.80zM911.77 89.7v-8.90h0.9v8.90zM915.33 89.7v-7.70h0.9v7.70zM918.89 89.7v-9.40h0.9v9.40zM922.45 89.7v-22.50h0.9v22.50zM926.01 89.7v-28.50h0.9v28.50zM929.57 89.7v-32.70h0.9v32.70zM933.13 89.7v-19.70h0.9v19.70zM936.69 89.7v-21.40h0.9v21.40zM940.25 89.7v-15.50h0.9v15.50zM943.81 89.7v-17.40h0.9v17.40zM947.37 89.7v-18.40h0.9v18.40zM950.93 89.7v-18.40h0.9v18.40zM954.49 89.7v-16.50h0.9v16.50zM958.05 89.7v-17.40h0.9v17.40zM961.61 89.7v-17.60h0.9v17.60zM965.17 89.7v-17.20h0.9v17.20zM968.73 89.7v-18.40h0.9v18.40zM972.29 89.7v-16.20h0.9v16.20zM975.85 89.7v-16.50h0.9v16.50zM979.41 89.7v-16.70h0.9v16.70zM982.97 89.7v-17.40h0.9v17.40zM986.53 89.7v-15.90h0.9v15.90zM990.09 89.7v-17.90h0.9v17.90zM993.65 89.7v-16.70h0.9v16.70zM997.21 89.7v-16.90h0.9v16.90zM1000.77 89.7v-18.30h0.9v18.30zM1004.33 89.7v-16.70h0.9v16.70zM1007.89 89.7v-17.80h0.9v17.80zM1011.45 89.7v-15.70h0.9v15.70zM1015.01 89.7v-17.20h0.9v17.20zM1018.57 89.7v-17.60h0.9v17.60zM1022.13 89.7v-15.50h0.9v15.50zM1025.69 89.7v-17.20h0.9v17.20zM1029.25 89.7v-15.50h0.9v15.50zM1032.81 89.7v-16.50h0.9v16.50zM1036.37 89.7v-15.30h0.9v15.30zM1039.93 89.7v-14.60h0.9v14.60zM1043.49 89.7v-9.40h0.9v9.40zM1047.05 89.7v-15.50h0.9v15.50zM1050.61 89.7v-8.20h0.9v8.20zM1054.17 89.7v-5.80h0.9v5.80zM1057.73 89.7v-5.20h0.9v5.20zM1061.29 89.7v-4.70h0.9v4.70zM1064.85 89.7v-5.40h0.9v5.40zM1068.41 89.7v-5.60h0.9v5.60zM1071.97 89.7v-5.90h0.9v5.90zM1075.53 89.7v-5.40h0.9v5.40zM1079.09 89.7v-4.20h0.9v4.20zM1082.65 89.7v-3.70h0.9v3.70zM1086.21 89.7v-3.70h0.9v3.70zM1089.77 89.7v-3.90h0.9v3.90zM1093.33 89.7v-4.20h0.9v4.20zM1096.89 89.7v-4.20h0.9v4.20zM1100.45 89.7v-4.23h0.9v4.23zM1104.01 89.7v-4.23h0.9v4.23zM1107.57 89.7v-4.22h0.9v4.22zM1111.13 89.7v-4.68h0.9v4.68zM1114.69 89.7v-3.99h0.9v3.99zM1118.25 89.7v-3.85h0.9v3.85zM1121.81 89.7v-4.70h0.9v4.70zM1125.37 89.7v-4.64h0.9v4.64zM1128.93 89.7v-4.74h0.9v4.74zM1132.49 89.7v-4.24h0.9v4.24zM1136.05 89.7v-4.71h0.9v4.71zM1139.61 89.7v-4.68h0.9v4.68zM1143.17 89.7v-4.05h0.9v4.05zM1146.73 89.7v-4.52h0.9v4.52zM1150.29 89.7v-4.60h0.9v4.60zM1153.85 89.7v-4.45h0.9v4.45zM1157.41 89.7v-4.32h0.9v4.32zM1160.97 89.7v-4.11h0.9v4.11zM1164.53 89.7v-4.16h0.9v4.16zM1168.09 89.7v-4.05h0.9v4.05zM1171.65 89.7v-3.91h0.9v3.91zM1175.21 89.7v-4.38h0.9v4.38zM1178.77 89.7v-4.11h0.9v4.11zM1182.33 89.7v-4.58h0.9v4.58zM1185.89 89.7v-3.89h0.9v3.89zM1189.45 89.7v-4.66h0.9v4.66zM1193.01 89.7v-4.47h0.9v4.47zM1196.57 89.7v-4.68h0.9v4.68zM1200.13 89.7v-4.66h0.9v4.66zM1203.69 89.7v-4.66h0.9v4.66zM1207.25 89.7v-4.37h0.9v4.37zM1210.81 89.7v-3.86h0.9v3.86zM1214.37 89.7v-4.52h0.9v4.52zM1217.93 89.7v-4.00h0.9v4.00zM1221.49 89.7v-4.12h0.9v4.12zM1225.05 89.7v-4.45h0.9v4.45zM1228.61 89.7v-4.32h0.9v4.32zM1232.17 89.7v-4.22h0.9v4.22zM1235.73 89.7v-4.70h0.9v4.70zM1239.29 89.7v-4.40h0.9v4.40zM1242.85 89.7v-4.16h0.9v4.16zM1246.41 89.7v-4.08h0.9v4.08zM1249.97 89.7v-4.63h0.9v4.63zM1253.53 89.7v-4.28h0.9v4.28zM1257.09 89.7v-4.55h0.9v4.55zM1260.65 89.7v-4.17h0.9v4.17zM1264.21 89.7v-4.03h0.9v4.03zM1267.77 89.7v-4.33h0.9v4.33zM1271.33 89.7v-4.59h0.9v4.59zM1274.89 89.7v-4.00h0.9v4.00zM1278.45 89.7v-4.56h0.9v4.56zM1282.01 89.7v-4.68h0.9v4.68z" fill="#e2cc8e"/></svg>
<div class="axl" style="left:27.2px">16:55</div>
<div class="axl" style="left:134.0px">17:00</div>
<div class="axl" style="left:240.8px">17:05</div>
<div class="axl" style="left:347.6px">17:10</div>
<div class="axl" style="left:454.4px">17:15</div>
<div class="axl" style="left:561.2px">17:20</div>
<div class="axl" style="left:668.0px">17:25</div>
<div class="axl" style="left:774.8px">17:30</div>
<div class="axl" style="left:881.6px">17:35</div>
<div class="axl" style="left:988.4px">17:40</div>
<div class="axl" style="left:1095.2px">17:45</div>
<div class="axl" style="left:1202.0px">17:50</div>
<div class="panel" style="left:4px;top:118.4px;width:1290px;height:560px"></div>
<div class="abs" style="left:10.2px;top:124.3px;width:201.2px;height:18.3px;background:#111217;border:1px solid #2f3137;border-radius:1.5px"></div>
<div class="abs" style="left:15.6px;top:129px;font-size:8.3px;color:#75767e;line-height:10px">Search..</div>
<div class="btn" style="left:1097.2px;top:124.7px;width:15.2px;height:14.3px"></div>
<div class="abs" style="left:1101.6px;top:128.5px;width:6.2px;height:6.2px;border-radius:50%;background:linear-gradient(90deg,#b9e0dc,#f1d9d2 45%,#f6ddc4 60%,#f1efb4)"></div>
<div class="btn" style="left:1116.4px;top:124.7px;width:40.6px;height:14.3px"></div>
<div class="abs" style="left:1118.8px;top:126.7px;width:17.8px;height:9.8px;background:#3a3c42;border-radius:1px"></div>
<svg class="abs" style="left:1120px;top:126.35px" width="34" height="11" viewBox="0 0 34 11"><path d="M3.8 2.3h7.7v1.3h-1.5v0.95h1.2v1.05h-1.2v0.95h1.5v1.35h-7.7z" fill="#8f919d"/><path d="M30 2.3h-7.7v1.3h1.5v0.95h-1.2v1.05h1.2v0.95h-1.5v1.35h7.7z" fill="#6c6e7a"/></svg>
<div class="btn" style="left:1161.2px;top:124.7px;width:120.2px;height:14.3px"></div>
<div class="abs" style="left:1254px;top:126.7px;width:24.8px;height:9.8px;background:#3a3c43;border-radius:1px"></div>
<div class="bt" style="left:1168.2px">Top Table</div>
<div class="bt" style="left:1208.3px;letter-spacing:-0.1px">Flame Graph</div>
<div class="bt" style="left:1258.6px;color:#e6e6ec;-webkit-text-stroke:0.25px #e6e6ec;letter-spacing:0.15px">Both</div>
<div class="tbl"></div>
<svg class="abs" style="left:0;top:0" width="660" height="668" viewBox="0 0 660 668"><rect x="48.85" y="168.3" width="0.9" height="500" fill="#30333b"/><rect x="509.05" y="168.3" width="0.9" height="500" fill="#30333b"/><rect x="577.85" y="168.3" width="0.9" height="500" fill="#30333b"/><rect x="15" y="167.80" width="632.2" height="0.9" fill="#30333b"/><rect x="15" y="188.47" width="632.2" height="0.9" fill="#30333b"/><rect x="15" y="209.14" width="632.2" height="0.9" fill="#30333b"/><rect x="15" y="229.81" width="632.2" height="0.9" fill="#30333b"/><rect x="15" y="250.48" width="632.2" height="0.9" fill="#30333b"/><rect x="15" y="271.15" width="632.2" height="0.9" fill="#30333b"/><rect x="15" y="291.82" width="632.2" height="0.9" fill="#30333b"/><rect x="15" y="312.49" width="632.2" height="0.9" fill="#30333b"/><rect x="15" y="333.16" width="632.2" height="0.9" fill="#30333b"/><rect x="15" y="353.83" width="632.2" height="0.9" fill="#30333b"/><rect x="15" y="374.50" width="632.2" height="0.9" fill="#30333b"/><rect x="15" y="395.17" width="632.2" height="0.9" fill="#30333b"/><rect x="15" y="415.84" width="632.2" height="0.9" fill="#30333b"/><rect x="15" y="436.51" width="632.2" height="0.9" fill="#30333b"/><rect x="15" y="457.18" width="632.2" height="0.9" fill="#30333b"/><rect x="15" y="477.85" width="632.2" height="0.9" fill="#30333b"/><rect x="15" y="498.52" width="632.2" height="0.9" fill="#30333b"/><rect x="15" y="519.19" width="632.2" height="0.9" fill="#30333b"/><rect x="15" y="539.86" width="632.2" height="0.9" fill="#30333b"/><rect x="15" y="560.53" width="632.2" height="0.9" fill="#30333b"/><rect x="15" y="581.20" width="632.2" height="0.9" fill="#30333b"/><rect x="15" y="601.87" width="632.2" height="0.9" fill="#30333b"/><rect x="15" y="622.54" width="632.2" height="0.9" fill="#30333b"/><rect x="15" y="643.21" width="632.2" height="0.9" fill="#30333b"/><rect x="15" y="663.88" width="632.2" height="0.9" fill="#30333b"/></svg>
<div class="th" style="left:53.4px;top:154.4px">Symbol</div>
<div class="th" style="left:543.6px;top:154.4px">Self</div>
<svg class="abs" style="left:563.6px;top:156.2px" width="8" height="8" viewBox="0 0 8 8"><path d="M4 1v5.6M1.6 4.3L4 6.7l2.4-2.4" stroke="#ececf2" stroke-width="1.25" fill="none"/></svg>
<div class="th" style="left:621.3px;top:154.4px">Total</div>
<svg class="abs" style="left:20px;top:173.25px" width="11" height="11" viewBox="0 0 11 11"><circle cx="4.45" cy="4.95" r="2.85" stroke="#cfcfd6" stroke-width="1.1" fill="none"/><path d="M6.55 7.05L8.7 9.3" stroke="#cfcfd6" stroke-width="1.1" stroke-linecap="round"/></svg>
<svg class="abs" style="left:35px;top:173.25px" width="9" height="12" viewBox="0 0 9 12"><path d="M4.1 1.1L1.5 4.2H6.7ZM4.1 10.1L1.5 6.9H6.7Z" stroke="#cfcfd6" stroke-width="0.95" fill="none" stroke-linejoin="round"/></svg>
<div class="sym" style="top:174.25px;letter-spacing:0.069px">other</div>
<div class="num" style="right:706.01px;top:174.65px;letter-spacing:-0.413px">15.1 mins</div>
<div class="num" style="right:636.21px;top:174.65px;letter-spacing:-0.413px">15.1 mins</div>
<svg class="abs" style="left:20px;top:193.92px" width="11" height="11" viewBox="0 0 11 11"><circle cx="4.45" cy="4.95" r="2.85" stroke="#cfcfd6" stroke-width="1.1" fill="none"/><path d="M6.55 7.05L8.7 9.3" stroke="#cfcfd6" stroke-width="1.1" stroke-linecap="round"/></svg>
<svg class="abs" style="left:35px;top:193.92px" width="9" height="12" viewBox="0 0 9 12"><path d="M4.1 1.1L1.5 4.2H6.7ZM4.1 10.1L1.5 6.9H6.7Z" stroke="#cfcfd6" stroke-width="0.95" fill="none" stroke-linejoin="round"/></svg>
<div class="sym" style="top:194.92px;letter-spacing:0.031px">libjvm.so.ZMark::mark_and_follow</div>
<div class="num" style="right:705.64px;top:195.32px;letter-spacing:-0.036px">6.09 mins</div>
<div class="num" style="right:635.84px;top:195.32px;letter-spacing:-0.036px">6.09 mins</div>
<svg class="abs" style="left:20px;top:214.59px" width="11" height="11" viewBox="0 0 11 11"><circle cx="4.45" cy="4.95" r="2.85" stroke="#cfcfd6" stroke-width="1.1" fill="none"/><path d="M6.55 7.05L8.7 9.3" stroke="#cfcfd6" stroke-width="1.1" stroke-linecap="round"/></svg>
<svg class="abs" style="left:35px;top:214.59px" width="9" height="12" viewBox="0 0 9 12"><path d="M4.1 1.1L1.5 4.2H6.7ZM4.1 10.1L1.5 6.9H6.7Z" stroke="#cfcfd6" stroke-width="0.95" fill="none" stroke-linejoin="round"/></svg>
<div class="sym" style="top:215.59px;letter-spacing:-0.009px">libjvm.so.ZBarrier::mark_barrier_on_oop_slow_path</div>
<div class="num" style="right:705.64px;top:215.99px;letter-spacing:-0.036px">4.76 mins</div>
<div class="num" style="right:636.02px;top:215.99px;letter-spacing:-0.224px">5.21 mins</div>
<svg class="abs" style="left:20px;top:235.26px" width="11" height="11" viewBox="0 0 11 11"><circle cx="4.45" cy="4.95" r="2.85" stroke="#cfcfd6" stroke-width="1.1" fill="none"/><path d="M6.55 7.05L8.7 9.3" stroke="#cfcfd6" stroke-width="1.1" stroke-linecap="round"/></svg>
<svg class="abs" style="left:35px;top:235.26px" width="9" height="12" viewBox="0 0 9 12"><path d="M4.1 1.1L1.5 4.2H6.7ZM4.1 10.1L1.5 6.9H6.7Z" stroke="#cfcfd6" stroke-width="0.95" fill="none" stroke-linejoin="round"/></svg>
<div class="sym" style="top:236.26px;letter-spacing:-0.037px">libjvm.so.void OopOopIterateDispatch&lt;ZMarkBarrierOopClosure&lt;false&gt; &gt;::Table::oop_oop_iterate&lt;Insta…</div>
<div class="num" style="right:705.64px;top:236.66px;letter-spacing:-0.036px">2.85 mins</div>
<div class="num" style="right:635.84px;top:236.66px;letter-spacing:-0.036px">6.89 mins</div>
<svg class="abs" style="left:20px;top:255.93px" width="11" height="11" viewBox="0 0 11 11"><circle cx="4.45" cy="4.95" r="2.85" stroke="#cfcfd6" stroke-width="1.1" fill="none"/><path d="M6.55 7.05L8.7 9.3" stroke="#cfcfd6" stroke-width="1.1" stroke-linecap="round"/></svg>
<svg class="abs" style="left:35px;top:255.93px" width="9" height="12" viewBox="0 0 9 12"><path d="M4.1 1.1L1.5 4.2H6.7ZM4.1 10.1L1.5 6.9H6.7Z" stroke="#cfcfd6" stroke-width="0.95" fill="none" stroke-linejoin="round"/></svg>
<div class="sym" style="top:256.93px;letter-spacing:0.030px">java/util/concurrent/ConcurrentSkipListMap.doPut</div>
<div class="num" style="right:705.82px;top:257.33px;letter-spacing:-0.224px">1.70 mins</div>
<div class="num" style="right:636.02px;top:257.33px;letter-spacing:-0.224px">2.21 mins</div>
<svg class="abs" style="left:20px;top:276.60px" width="11" height="11" viewBox="0 0 11 11"><circle cx="4.45" cy="4.95" r="2.85" stroke="#cfcfd6" stroke-width="1.1" fill="none"/><path d="M6.55 7.05L8.7 9.3" stroke="#cfcfd6" stroke-width="1.1" stroke-linecap="round"/></svg>
<svg class="abs" style="left:35px;top:276.60px" width="9" height="12" viewBox="0 0 9 12"><path d="M4.1 1.1L1.5 4.2H6.7ZM4.1 10.1L1.5 6.9H6.7Z" stroke="#cfcfd6" stroke-width="0.95" fill="none" stroke-linejoin="round"/></svg>
<div class="sym" style="top:277.60px;letter-spacing:0.026px">java/util/concurrent/ConcurrentSkipListMap$Iter.advance</div>
<div class="num" style="right:705.67px;top:278.00px;letter-spacing:-0.070px">52.8 s</div>
<div class="num" style="right:635.87px;top:278.00px;letter-spacing:-0.070px">52.8 s</div>
<svg class="abs" style="left:20px;top:297.27px" width="11" height="11" viewBox="0 0 11 11"><circle cx="4.45" cy="4.95" r="2.85" stroke="#cfcfd6" stroke-width="1.1" fill="none"/><path d="M6.55 7.05L8.7 9.3" stroke="#cfcfd6" stroke-width="1.1" stroke-linecap="round"/></svg>
<svg class="abs" style="left:35px;top:297.27px" width="9" height="12" viewBox="0 0 9 12"><path d="M4.1 1.1L1.5 4.2H6.7ZM4.1 10.1L1.5 6.9H6.7Z" stroke="#cfcfd6" stroke-width="0.95" fill="none" stroke-linejoin="round"/></svg>
<div class="sym" style="top:298.27px;letter-spacing:-0.025px">libjvm.so..annobin__ZL15forwarding_findP11ZForwardingmPm.start</div>
<div class="num" style="right:705.67px;top:298.67px;letter-spacing:-0.070px">40.3 s</div>
<div class="num" style="right:635.87px;top:298.67px;letter-spacing:-0.070px">40.3 s</div>
<svg class="abs" style="left:20px;top:317.94px" width="11" height="11" viewBox="0 0 11 11"><circle cx="4.45" cy="4.95" r="2.85" stroke="#cfcfd6" stroke-width="1.1" fill="none"/><path d="M6.55 7.05L8.7 9.3" stroke="#cfcfd6" stroke-width="1.1" stroke-linecap="round"/></svg>
<svg class="abs" style="left:35px;top:317.94px" width="9" height="12" viewBox="0 0 9 12"><path d="M4.1 1.1L1.5 4.2H6.7ZM4.1 10.1L1.5 6.9H6.7Z" stroke="#cfcfd6" stroke-width="0.95" fill="none" stroke-linejoin="round"/></svg>
<div class="sym" style="top:318.94px;letter-spacing:-0.004px">.jbyte_disjoint_arraycopy_avx3</div>
<div class="num" style="right:705.67px;top:319.34px;letter-spacing:-0.070px">38.4 s</div>
<div class="num" style="right:635.87px;top:319.34px;letter-spacing:-0.070px">38.4 s</div>
<svg class="abs" style="left:20px;top:338.61px" width="11" height="11" viewBox="0 0 11 11"><circle cx="4.45" cy="4.95" r="2.85" stroke="#cfcfd6" stroke-width="1.1" fill="none"/><path d="M6.55 7.05L8.7 9.3" stroke="#cfcfd6" stroke-width="1.1" stroke-linecap="round"/></svg>
<svg class="abs" style="left:35px;top:338.61px" width="9" height="12" viewBox="0 0 9 12"><path d="M4.1 1.1L1.5 4.2H6.7ZM4.1 10.1L1.5 6.9H6.7Z" stroke="#cfcfd6" stroke-width="0.95" fill="none" stroke-linejoin="round"/></svg>
<div class="sym" style="top:339.61px;letter-spacing:-0.010px">com/yammer/metrics/stats/ExponentiallyDecayingSample.update</div>
<div class="num" style="right:705.67px;top:340.01px;letter-spacing:-0.070px">36.8 s</div>
<div class="num" style="right:635.84px;top:340.01px;letter-spacing:-0.036px">6.52 mins</div>
<svg class="abs" style="left:20px;top:359.28px" width="11" height="11" viewBox="0 0 11 11"><circle cx="4.45" cy="4.95" r="2.85" stroke="#cfcfd6" stroke-width="1.1" fill="none"/><path d="M6.55 7.05L8.7 9.3" stroke="#cfcfd6" stroke-width="1.1" stroke-linecap="round"/></svg>
<svg class="abs" style="left:35px;top:359.28px" width="9" height="12" viewBox="0 0 9 12"><path d="M4.1 1.1L1.5 4.2H6.7ZM4.1 10.1L1.5 6.9H6.7Z" stroke="#cfcfd6" stroke-width="0.95" fill="none" stroke-linejoin="round"/></svg>
<div class="sym" style="top:360.28px;letter-spacing:0.092px">.[vdso]</div>
<div class="num" style="right:705.67px;top:360.68px;letter-spacing:-0.070px">30.6 s</div>
<div class="num" style="right:635.87px;top:360.68px;letter-spacing:-0.070px">30.6 s</div>
<svg class="abs" style="left:20px;top:379.95px" width="11" height="11" viewBox="0 0 11 11"><circle cx="4.45" cy="4.95" r="2.85" stroke="#cfcfd6" stroke-width="1.1" fill="none"/><path d="M6.55 7.05L8.7 9.3" stroke="#cfcfd6" stroke-width="1.1" stroke-linecap="round"/></svg>
<svg class="abs" style="left:35px;top:379.95px" width="9" height="12" viewBox="0 0 9 12"><path d="M4.1 1.1L1.5 4.2H6.7ZM4.1 10.1L1.5 6.9H6.7Z" stroke="#cfcfd6" stroke-width="0.95" fill="none" stroke-linejoin="round"/></svg>
<div class="sym" style="top:380.95px;letter-spacing:-0.017px">libjvm.so.CompiledMethod::cleanup_inline_caches_impl</div>
<div class="num" style="right:705.67px;top:381.35px;letter-spacing:-0.070px">30.5 s</div>
<div class="num" style="right:636.02px;top:381.35px;letter-spacing:-0.224px">1.38 mins</div>
<svg class="abs" style="left:20px;top:400.62px" width="11" height="11" viewBox="0 0 11 11"><circle cx="4.45" cy="4.95" r="2.85" stroke="#cfcfd6" stroke-width="1.1" fill="none"/><path d="M6.55 7.05L8.7 9.3" stroke="#cfcfd6" stroke-width="1.1" stroke-linecap="round"/></svg>
<svg class="abs" style="left:35px;top:400.62px" width="9" height="12" viewBox="0 0 9 12"><path d="M4.1 1.1L1.5 4.2H6.7ZM4.1 10.1L1.5 6.9H6.7Z" stroke="#cfcfd6" stroke-width="0.95" fill="none" stroke-linejoin="round"/></svg>
<div class="sym" style="top:401.62px;letter-spacing:-0.014px">libjvm.so..annobin__ZN5ZMark12follow_arrayEmmb.part.0.start</div>
<div class="num" style="right:705.67px;top:402.02px;letter-spacing:-0.070px">28.9 s</div>
<div class="num" style="right:636.02px;top:402.02px;letter-spacing:-0.224px">1.38 mins</div>
<svg class="abs" style="left:20px;top:421.29px" width="11" height="11" viewBox="0 0 11 11"><circle cx="4.45" cy="4.95" r="2.85" stroke="#cfcfd6" stroke-width="1.1" fill="none"/><path d="M6.55 7.05L8.7 9.3" stroke="#cfcfd6" stroke-width="1.1" stroke-linecap="round"/></svg>
<svg class="abs" style="left:35px;top:421.29px" width="9" height="12" viewBox="0 0 9 12"><path d="M4.1 1.1L1.5 4.2H6.7ZM4.1 10.1L1.5 6.9H6.7Z" stroke="#cfcfd6" stroke-width="0.95" fill="none" stroke-linejoin="round"/></svg>
<div class="sym" style="top:422.29px;letter-spacing:0.077px">libc-2.32.so.writev</div>
<div class="num" style="right:705.67px;top:422.69px;letter-spacing:-0.070px">28.8 s</div>
<div class="num" style="right:635.87px;top:422.69px;letter-spacing:-0.070px">28.8 s</div>
<svg class="abs" style="left:20px;top:441.96px" width="11" height="11" viewBox="0 0 11 11"><circle cx="4.45" cy="4.95" r="2.85" stroke="#cfcfd6" stroke-width="1.1" fill="none"/><path d="M6.55 7.05L8.7 9.3" stroke="#cfcfd6" stroke-width="1.1" stroke-linecap="round"/></svg>
<svg class="abs" style="left:35px;top:441.96px" width="9" height="12" viewBox="0 0 9 12"><path d="M4.1 1.1L1.5 4.2H6.7ZM4.1 10.1L1.5 6.9H6.7Z" stroke="#cfcfd6" stroke-width="0.95" fill="none" stroke-linejoin="round"/></svg>
<div class="sym" style="top:442.96px;letter-spacing:-0.074px">.updateBytesCRC32</div>
<div class="num" style="right:705.67px;top:443.36px;letter-spacing:-0.070px">26.4 s</div>
<div class="num" style="right:635.87px;top:443.36px;letter-spacing:-0.070px">26.4 s</div>
<svg class="abs" style="left:20px;top:462.63px" width="11" height="11" viewBox="0 0 11 11"><circle cx="4.45" cy="4.95" r="2.85" stroke="#cfcfd6" stroke-width="1.1" fill="none"/><path d="M6.55 7.05L8.7 9.3" stroke="#cfcfd6" stroke-width="1.1" stroke-linecap="round"/></svg>
<svg class="abs" style="left:35px;top:462.63px" width="9" height="12" viewBox="0 0 9 12"><path d="M4.1 1.1L1.5 4.2H6.7ZM4.1 10.1L1.5 6.9H6.7Z" stroke="#cfcfd6" stroke-width="0.95" fill="none" stroke-linejoin="round"/></svg>
<div class="sym" style="top:463.63px;letter-spacing:0.042px">libpthread-2.32.so.__read</div>
<div class="num" style="right:705.67px;top:464.03px;letter-spacing:-0.070px">26.4 s</div>
<div class="num" style="right:635.87px;top:464.03px;letter-spacing:-0.070px">26.4 s</div>
<svg class="abs" style="left:20px;top:483.30px" width="11" height="11" viewBox="0 0 11 11"><circle cx="4.45" cy="4.95" r="2.85" stroke="#cfcfd6" stroke-width="1.1" fill="none"/><path d="M6.55 7.05L8.7 9.3" stroke="#cfcfd6" stroke-width="1.1" stroke-linecap="round"/></svg>
<svg class="abs" style="left:35px;top:483.30px" width="9" height="12" viewBox="0 0 9 12"><path d="M4.1 1.1L1.5 4.2H6.7ZM4.1 10.1L1.5 6.9H6.7Z" stroke="#cfcfd6" stroke-width="0.95" fill="none" stroke-linejoin="round"/></svg>
<div class="sym" style="top:484.30px;letter-spacing:0.055px">libpthread-2.32.so.__pthread_cond_signal</div>
<div class="num" style="right:705.67px;top:484.70px;letter-spacing:-0.070px">26.0 s</div>
<div class="num" style="right:635.87px;top:484.70px;letter-spacing:-0.070px">26.0 s</div>
<svg class="abs" style="left:20px;top:503.97px" width="11" height="11" viewBox="0 0 11 11"><circle cx="4.45" cy="4.95" r="2.85" stroke="#cfcfd6" stroke-width="1.1" fill="none"/><path d="M6.55 7.05L8.7 9.3" stroke="#cfcfd6" stroke-width="1.1" stroke-linecap="round"/></svg>
<svg class="abs" style="left:35px;top:503.97px" width="9" height="12" viewBox="0 0 9 12"><path d="M4.1 1.1L1.5 4.2H6.7ZM4.1 10.1L1.5 6.9H6.7Z" stroke="#cfcfd6" stroke-width="0.95" fill="none" stroke-linejoin="round"/></svg>
<div class="sym" style="top:504.97px;letter-spacing:0.074px">libpthread-2.32.so.__pthread_cond_timedwait</div>
<div class="num" style="right:705.67px;top:505.37px;letter-spacing:-0.070px">23.7 s</div>
<div class="num" style="right:635.87px;top:505.37px;letter-spacing:-0.070px">23.7 s</div>
<svg class="abs" style="left:20px;top:524.64px" width="11" height="11" viewBox="0 0 11 11"><circle cx="4.45" cy="4.95" r="2.85" stroke="#cfcfd6" stroke-width="1.1" fill="none"/><path d="M6.55 7.05L8.7 9.3" stroke="#cfcfd6" stroke-width="1.1" stroke-linecap="round"/></svg>
<svg class="abs" style="left:35px;top:524.64px" width="9" height="12" viewBox="0 0 9 12"><path d="M4.1 1.1L1.5 4.2H6.7ZM4.1 10.1L1.5 6.9H6.7Z" stroke="#cfcfd6" stroke-width="0.95" fill="none" stroke-linejoin="round"/></svg>
<div class="sym" style="top:525.64px;letter-spacing:0.057px">.itable stub</div>
<div class="num" style="right:705.67px;top:526.04px;letter-spacing:-0.070px">22.2 s</div>
<div class="num" style="right:635.87px;top:526.04px;letter-spacing:-0.070px">22.2 s</div>
<svg class="abs" style="left:20px;top:545.31px" width="11" height="11" viewBox="0 0 11 11"><circle cx="4.45" cy="4.95" r="2.85" stroke="#cfcfd6" stroke-width="1.1" fill="none"/><path d="M6.55 7.05L8.7 9.3" stroke="#cfcfd6" stroke-width="1.1" stroke-linecap="round"/></svg>
<svg class="abs" style="left:35px;top:545.31px" width="9" height="12" viewBox="0 0 9 12"><path d="M4.1 1.1L1.5 4.2H6.7ZM4.1 10.1L1.5 6.9H6.7Z" stroke="#cfcfd6" stroke-width="0.95" fill="none" stroke-linejoin="round"/></svg>
<div class="sym" style="top:546.31px;letter-spacing:0.037px">libjvm.so.ZMark::follow_object</div>
<div class="num" style="right:705.67px;top:546.71px;letter-spacing:-0.070px">22.2 s</div>
<div class="num" style="right:635.84px;top:546.71px;letter-spacing:-0.036px">8.04 mins</div>
<svg class="abs" style="left:20px;top:565.98px" width="11" height="11" viewBox="0 0 11 11"><circle cx="4.45" cy="4.95" r="2.85" stroke="#cfcfd6" stroke-width="1.1" fill="none"/><path d="M6.55 7.05L8.7 9.3" stroke="#cfcfd6" stroke-width="1.1" stroke-linecap="round"/></svg>
<svg class="abs" style="left:35px;top:565.98px" width="9" height="12" viewBox="0 0 9 12"><path d="M4.1 1.1L1.5 4.2H6.7ZM4.1 10.1L1.5 6.9H6.7Z" stroke="#cfcfd6" stroke-width="0.95" fill="none" stroke-linejoin="round"/></svg>
<div class="sym" style="top:566.98px;letter-spacing:0.045px">libpthread-2.32.so.__pthread_cond_wait</div>
<div class="num" style="right:705.95px;top:567.38px;letter-spacing:-0.353px">21.6 s</div>
<div class="num" style="right:636.15px;top:567.38px;letter-spacing:-0.353px">21.6 s</div>
<svg class="abs" style="left:20px;top:586.65px" width="11" height="11" viewBox="0 0 11 11"><circle cx="4.45" cy="4.95" r="2.85" stroke="#cfcfd6" stroke-width="1.1" fill="none"/><path d="M6.55 7.05L8.7 9.3" stroke="#cfcfd6" stroke-width="1.1" stroke-linecap="round"/></svg>
<svg class="abs" style="left:35px;top:586.65px" width="9" height="12" viewBox="0 0 9 12"><path d="M4.1 1.1L1.5 4.2H6.7ZM4.1 10.1L1.5 6.9H6.7Z" stroke="#cfcfd6" stroke-width="0.95" fill="none" stroke-linejoin="round"/></svg>
<div class="sym" style="top:587.65px;letter-spacing:0.071px">libpthread-2.32.so.__libc_write</div>
<div class="num" style="right:705.95px;top:588.05px;letter-spacing:-0.353px">20.1 s</div>
<div class="num" style="right:636.15px;top:588.05px;letter-spacing:-0.353px">20.1 s</div>
<svg class="abs" style="left:20px;top:607.32px" width="11" height="11" viewBox="0 0 11 11"><circle cx="4.45" cy="4.95" r="2.85" stroke="#cfcfd6" stroke-width="1.1" fill="none"/><path d="M6.55 7.05L8.7 9.3" stroke="#cfcfd6" stroke-width="1.1" stroke-linecap="round"/></svg>
<svg class="abs" style="left:35px;top:607.32px" width="9" height="12" viewBox="0 0 9 12"><path d="M4.1 1.1L1.5 4.2H6.7ZM4.1 10.1L1.5 6.9H6.7Z" stroke="#cfcfd6" stroke-width="0.95" fill="none" stroke-linejoin="round"/></svg>
<div class="sym" style="top:608.32px;letter-spacing:0.046px">libc-2.32.so.epoll_wait</div>
<div class="num" style="right:705.95px;top:608.72px;letter-spacing:-0.353px">18.2 s</div>
<div class="num" style="right:636.15px;top:608.72px;letter-spacing:-0.353px">18.2 s</div>
<svg class="abs" style="left:20px;top:627.99px" width="11" height="11" viewBox="0 0 11 11"><circle cx="4.45" cy="4.95" r="2.85" stroke="#cfcfd6" stroke-width="1.1" fill="none"/><path d="M6.55 7.05L8.7 9.3" stroke="#cfcfd6" stroke-width="1.1" stroke-linecap="round"/></svg>
<svg class="abs" style="left:35px;top:627.99px" width="9" height="12" viewBox="0 0 9 12"><path d="M4.1 1.1L1.5 4.2H6.7ZM4.1 10.1L1.5 6.9H6.7Z" stroke="#cfcfd6" stroke-width="0.95" fill="none" stroke-linejoin="round"/></svg>
<div class="sym" style="top:628.99px;letter-spacing:0.016px">libjvm.so.ZNMethodUnlinkClosure::do_nmethod</div>
<div class="num" style="right:705.95px;top:629.39px;letter-spacing:-0.353px">15.9 s</div>
<div class="num" style="right:635.84px;top:629.39px;letter-spacing:-0.036px">2.39 mins</div>
<svg class="abs" style="left:20px;top:648.66px" width="11" height="11" viewBox="0 0 11 11"><circle cx="4.45" cy="4.95" r="2.85" stroke="#cfcfd6" stroke-width="1.1" fill="none"/><path d="M6.55 7.05L8.7 9.3" stroke="#cfcfd6" stroke-width="1.1" stroke-linecap="round"/></svg>
<svg class="abs" style="left:35px;top:648.66px" width="9" height="12" viewBox="0 0 9 12"><path d="M4.1 1.1L1.5 4.2H6.7ZM4.1 10.1L1.5 6.9H6.7Z" stroke="#cfcfd6" stroke-width="0.95" fill="none" stroke-linejoin="round"/></svg>
<div class="sym" style="top:649.66px;letter-spacing:-0.073px">libjvm.so.ClassLoaderData::oops_do</div>
<div class="num" style="right:705.95px;top:650.06px;letter-spacing:-0.353px">15.8 s</div>
<div class="num" style="right:636.15px;top:650.06px;letter-spacing:-0.353px">15.8 s</div>
<svg class="abs" style="left:20px;top:669.33px" width="11" height="11" viewBox="0 0 11 11"><circle cx="4.45" cy="4.95" r="2.85" stroke="#cfcfd6" stroke-width="1.1" fill="none"/><path d="M6.55 7.05L8.7 9.3" stroke="#cfcfd6" stroke-width="1.1" stroke-linecap="round"/></svg>
<svg class="abs" style="left:35px;top:669.33px" width="9" height="12" viewBox="0 0 9 12"><path d="M4.1 1.1L1.5 4.2H6.7ZM4.1 10.1L1.5 6.9H6.7Z" stroke="#cfcfd6" stroke-width="0.95" fill="none" stroke-linejoin="round"/></svg>
<div class="sym" style="top:670.33px;letter-spacing:0.000px">libjvm.so.ZBarrier::load_barrier_on_oop_slow_path</div>
<div class="num" style="right:705.95px;top:670.73px;letter-spacing:-0.353px">15.2 s</div>
<div class="num" style="right:636.02px;top:670.73px;letter-spacing:-0.224px">1.02 mins</div>
<div class="abs" style="left:903.1px;top:152.3px;width:138.8px;height:15.6px;border-radius:6px;background:#1d1e23"></div>
<div class="abs" style="left:907.5px;top:155.8px;font-size:8.37px;color:#a9aab2;white-space:nowrap;line-height:10px">58.8 mins | 3.53 Tri samples (Time)</div>
<svg id="fg" class="abs" style="left:0;top:0" width="1280" height="668" viewBox="0 0 1280 668"><style>.c0{fill:#353841}.c1{fill:#2e3038}.c2{fill:#8a84c9}.c3{fill:#8069bd}.c4{fill:#b3a4e2}.c5{fill:#e48f52}.c6{fill:#f8c199}.c7{fill:#fae39c}.c8{fill:#fddf6c}.c9{fill:#f4ca6a}.ca{fill:#e5ad5f}.cb{fill:#e6a8e6}.cc{fill:#d87cc9}.cd{fill:#93c98a}.ce{fill:#b4dea6}.cf{fill:#5b95d0}.c10{fill:#7fb3de}.c11{fill:#3d8bf2}.c12{fill:#5cc3dc}.c13{fill:#52bf9c}.c14{fill:#ea5f59}.c15{fill:#f08c86}.c16{fill:#e0894c}.c17{fill:#58b4d2}.c18{fill:#f5944e}#fg rect{height:13.3px}#fg .k{stroke:rgba(255,255,255,.3);stroke-width:.55px}#fg text{font-family:"Liberation Mono",monospace;font-size:8px;fill:#2e2c37;stroke:#2e2c37;stroke-width:.28px;transform:scaleX(0.867)}</style>
<rect class="c0" x="657" y="186.12" width="1.3"/>
<rect class="c0" x="658.3" y="186.12" width="1.7" style="height:25.23px"/>
<rect class="c1" x="660" y="186.12" width="4.9" style="height:37.85px"/>
<rect class="c0" x="665.2" y="198.73" width="1.8"/>
<rect class="c1" x="667" y="198.73" width="3" style="height:50.47px"/>
<rect class="c0" x="670" y="198.73" width="2" style="height:37.85px"/>
<rect class="c1" x="672" y="198.73" width="2.6" style="height:25.23px"/>
<rect class="c0" x="674.6" y="198.73" width="5.7"/>
<rect class="c0" x="680.5" y="186.12" width="3.2" style="height:277.57px"/>
<rect class="c0" x="681.4" y="463.69" width="0.8" style="height:205.31px"/>
<rect class="c0" x="684.3" y="236.59" width="3.2" style="height:432.41px"/>
<rect class="c1" x="687.5" y="236.59" width="3" style="height:227.11px"/>
<rect class="c0" x="690.7" y="236.59" width="1.5" style="height:432.41px"/>
<rect class="c1" x="692.5" y="274.44" width="3.1" style="height:394.56px"/>
<rect class="c0" x="710.9" y="223.97" width="3.5" style="height:239.72px"/>
<rect class="c0" x="722.4" y="451.07" width="0.6" style="height:75.7px"/>
<rect class="c1" x="728.6" y="425.84" width="1.6" style="height:243.16px"/>
<rect class="c0" x="696" y="589.86" width="4.1" style="height:79.14px"/>
<rect class="c1" x="700.1" y="602.48" width="2.2" style="height:66.52px"/>
<rect class="c0" x="715.4" y="312.29" width="6" style="height:37.85px"/>
<rect class="c1" x="721.6" y="261.82" width="1.8" style="height:100.94px"/>
<rect class="c0" x="723.4" y="274.44" width="2.1" style="height:100.94px"/>
<rect class="c1" x="725.5" y="362.75" width="6.5" style="height:63.09px"/>
<rect class="c0" x="732" y="387.99" width="6.5" style="height:50.47px"/>
<rect class="c1" x="738.5" y="337.52" width="5.5" style="height:88.32px"/>
<rect class="c0" x="744" y="387.99" width="7" style="height:37.85px"/>
<rect class="c1" x="751" y="287.05" width="4" style="height:151.4px"/>
<rect class="c0" x="741.4" y="299.67" width="1.1" style="height:37.85px"/>
<rect class="c0" x="753.2" y="287.05" width="1.4" style="height:50.47px"/>
<rect class="c1" x="726" y="425.84" width="1.4" style="height:113.55px"/>
<rect class="c0" x="729" y="425.84" width="0.8" style="height:88.32px"/>
<rect class="c1" x="770.2" y="274.44" width="4.2" style="height:176.64px"/>
<rect class="c0" x="772.8" y="274.44" width="1.6" style="height:176.64px"/>
<rect class="c1" x="755" y="425.84" width="5" style="height:25.23px"/>
<rect class="c1" x="760.3" y="451.07" width="9.3" style="height:75.7px"/>
<rect class="c0" x="764" y="451.07" width="4" style="height:126.17px"/>
<rect class="c0" x="761" y="451.07" width="0.6" style="height:176.64px"/>
<rect class="c0" x="756.4" y="463.69" width="0.6" style="height:50.47px"/>
<rect class="c0" x="758.4" y="463.69" width="0.6" style="height:37.85px"/>
<rect class="c0" x="794" y="324.9" width="8.6" style="height:126.17px"/>
<rect class="c1" x="797" y="324.9" width="2.5" style="height:126.17px"/>
<rect class="c1" x="775.5" y="501.54" width="2.7" style="height:167.46px"/>
<rect class="c0" x="778.4" y="640.33" width="10" style="height:28.67px"/>
<rect class="c1" x="815.7" y="312.29" width="3.3" style="height:138.79px"/>
<rect class="c0" x="817.6" y="274.44" width="24.4" style="height:63.09px"/>
<rect class="c1" x="819" y="337.52" width="7" style="height:113.55px"/>
<rect class="c0" x="826" y="337.52" width="5" style="height:126.17px"/>
<rect class="c1" x="831" y="236.59" width="5" style="height:201.87px"/>
<rect class="c0" x="836" y="261.82" width="6" style="height:164.02px"/>
<rect class="c0" x="816.4" y="463.69" width="0.6" style="height:205.31px"/>
<rect class="c0" x="822" y="463.69" width="0.6" style="height:151.4px"/>
<rect class="c0" x="826.6" y="488.93" width="0.6" style="height:151.4px"/>
<rect class="c0" x="832" y="463.69" width="0.6" style="height:176.64px"/>
<rect class="c0" x="838" y="438.46" width="0.5" style="height:126.17px"/>
<rect class="c1" x="803.4" y="501.54" width="2.9" style="height:167.46px"/>
<rect class="c0" x="806.5" y="577.24" width="6.9" style="height:91.76px"/>
<rect class="c0" x="842.8" y="375.37" width="5.6" style="height:293.63px"/>
<rect class="c0" x="850" y="223.97" width="1.4" style="height:164.02px"/>
<rect class="c0" x="859.4" y="324.9" width="5.6" style="height:37.85px"/>
<rect class="c1" x="851.6" y="337.52" width="7.4" style="height:50.47px"/>
<rect class="c0" x="865.5" y="299.67" width="9.5" style="height:50.47px"/>
<rect class="c1" x="866" y="350.14" width="4" style="height:50.47px"/>
<rect class="c0" x="870" y="350.14" width="4" style="height:25.23px"/>
<rect class="c1" x="875.2" y="223.97" width="3.4" style="height:214.49px"/>
<rect class="c0" x="876.6" y="223.97" width="1.6" style="height:445.03px"/>
<rect class="c0" x="887.2" y="425.84" width="1.2" style="height:138.79px"/>
<rect class="c1" x="892" y="198.73" width="2.2" style="height:113.55px"/>
<rect class="c0" x="894.4" y="236.59" width="4" style="height:75.7px"/>
<rect class="c1" x="896.4" y="249.2" width="2" style="height:63.09px"/>
<rect class="c0" x="889" y="438.46" width="0.5" style="height:230.54px"/>
<rect class="c0" x="892.6" y="312.29" width="0.6" style="height:126.17px"/>
<rect class="c0" x="896" y="312.29" width="0.6" style="height:88.32px"/>
<rect class="c0" x="900" y="299.67" width="5.2" style="height:113.55px"/>
<rect class="c1" x="906.4" y="299.67" width="3.8" style="height:151.4px"/>
<rect class="c0" x="910.2" y="299.67" width="4" style="height:151.4px"/>
<rect class="c1" x="915" y="287.05" width="4.6" style="height:25.23px"/>
<rect class="c0" x="919.6" y="287.05" width="4" style="height:25.23px"/>
<rect class="c0" x="918.8" y="312.29" width="0.6" style="height:75.7px"/>
<rect class="c0" x="911.8" y="400.61" width="0.6" style="height:88.32px"/>
<rect class="c1" x="924" y="211.35" width="4.2" style="height:100.94px"/>
<rect class="c0" x="926.4" y="211.35" width="2" style="height:151.4px"/>
<rect class="c0" x="929.7" y="350.14" width="6.3" style="height:37.85px"/>
<rect class="c1" x="930.3" y="387.99" width="3.7" style="height:25.23px"/>
<rect class="c1" x="937.4" y="211.35" width="7.8" style="height:126.17px"/>
<rect class="c0" x="939.8" y="211.35" width="2.2" style="height:138.79px"/>
<rect class="c0" x="945.4" y="236.59" width="2.6" style="height:100.94px"/>
<rect class="c0" x="948" y="236.59" width="4.2" style="height:227.11px"/>
<rect class="c1" x="952.2" y="236.59" width="4" style="height:100.94px"/>
<rect class="c1" x="953.4" y="337.52" width="0.8" style="height:88.32px"/>
<rect class="c1" x="954.4" y="287.05" width="5.8" style="height:50.47px"/>
<rect class="c0" x="949" y="463.69" width="0.6" style="height:50.47px"/>
<rect class="c0" x="960.9" y="438.46" width="0.6" style="height:230.54px"/>
<rect class="c1" x="979.6" y="223.97" width="4.6" style="height:113.55px"/>
<rect class="c0" x="983.6" y="223.97" width="7.8" style="height:88.32px"/>
<rect class="c0" x="985.6" y="312.29" width="4" style="height:138.79px"/>
<rect class="c1" x="986" y="223.97" width="2" style="height:227.11px"/>
<rect class="c1" x="992" y="261.82" width="6" style="height:63.09px"/>
<rect class="c0" x="993.8" y="261.82" width="2.6" style="height:189.26px"/>
<rect class="c0" x="976.2" y="488.93" width="0.6" style="height:180.07px"/>
<rect class="c0" x="972.4" y="501.54" width="0.6" style="height:167.46px"/>
<rect class="c0" x="998" y="287.05" width="2" style="height:100.94px"/>
<rect class="c0" x="1014.2" y="287.05" width="3.8"/>
<rect class="c0" x="1016.2" y="299.67" width="0.8" style="height:25.23px"/>
<rect class="c0" x="1017.5" y="299.67" width="7.5"/>
<rect class="c0" x="1018.3" y="299.67" width="0.9" style="height:25.23px"/>
<rect class="c0" x="1026.2" y="324.9" width="3.2"/>
<rect class="c0" x="1026.2" y="337.52" width="0.7"/>
<rect class="c0" x="1097.2" y="299.67" width="0.7" style="height:25.23px"/>
<rect class="c1" x="1197.8" y="223.97" width="5.4" style="height:75.7px"/>
<rect class="c0" x="1199.6" y="223.97" width="2" style="height:75.7px"/>
<rect class="c0" x="1189.4" y="287.05" width="5" style="height:25.23px"/>
<rect class="c1" x="1188" y="299.67" width="5.6" style="height:25.23px"/>
<rect class="c0" x="1172.9" y="312.29" width="8.7"/>
<rect class="c0" x="1178.4" y="324.9" width="0.6" style="height:50.47px"/>
<rect class="c0" x="1190.8" y="312.29" width="0.6" style="height:37.85px"/>
<rect class="c0" x="1203.6" y="299.67" width="7" style="height:25.23px"/>
<rect class="c0" x="1203.6" y="312.29" width="34.2"/>
<rect class="c0" x="1205.4" y="324.9" width="0.6"/>
<rect class="c0" x="1208" y="324.9" width="0.6"/>
<rect class="c0" x="1210.4" y="324.9" width="0.6"/>
<rect class="c0" x="1213" y="324.9" width="0.6"/>
<rect class="c0" x="1216.6" y="324.9" width="0.6"/>
<rect class="c0" x="1219.2" y="324.9" width="0.6"/>
<rect class="c0" x="1222" y="324.9" width="0.6"/>
<rect class="c0" x="1224.6" y="324.9" width="0.6"/>
<rect class="c0" x="1229" y="324.9" width="0.6"/>
<rect class="c0" x="1233" y="324.9" width="0.6"/>
<rect class="c0" x="1236" y="324.9" width="0.6"/>
<rect class="c0" x="1205" y="337.52" width="0.6"/>
<rect class="c0" x="1216.4" y="337.52" width="0.6"/>
<rect class="c0" x="1224.4" y="337.52" width="0.6" style="height:25.23px"/>
<rect class="c0" x="1230.6" y="299.67" width="7.2"/>
<rect class="c1" x="1238.3" y="324.9" width="14.5"/>
<rect class="c0" x="1242.4" y="337.52" width="0.6" style="height:37.85px"/>
<rect class="c0" x="1246.4" y="337.52" width="0.6" style="height:25.23px"/>
<rect class="c0" x="1250.6" y="337.52" width="0.6" style="height:50.47px"/>
<rect class="c0" x="1248.4" y="299.67" width="5.2" style="height:25.23px"/>
<rect class="c0" x="1262.8" y="312.29" width="5.6"/>
<rect class="c0" x="1266.6" y="324.9" width="0.6" style="height:214.49px"/>
<rect class="c1" x="1269.2" y="299.67" width="6.2" style="height:63.09px"/>
<rect class="c0" x="1275.4" y="299.67" width="0.6" style="height:201.87px"/>
<rect class="c0" x="1271.4" y="198.73" width="8.6" style="height:100.94px"/>
<rect class="c1" x="1273.5" y="198.73" width="3" style="height:138.79px"/>
<rect class="c0" x="1254.3" y="350.14" width="6.9" style="height:126.17px"/>
<rect class="c1" x="1256" y="476.31" width="4.8" style="height:25.23px"/>
<rect class="c0" x="1257" y="501.54" width="2.2"/>
<rect class="c0" x="1257.6" y="514.16" width="0.6" style="height:154.84px"/>
<rect class="c2 k" x="656.2" y="173.5" width="623.8"/><svg x="656.2" y="173.5" width="623.5" height="12.25"><text x="2.5" y="8.2">total (58.8 mins)</text></svg>
<rect class="c6 k" x="665.2" y="186.12" width="14.9"/><svg x="665.2" y="186.12" width="14.6" height="12.25"><text x="2.5" y="8.2">.unknown</text></svg>
<rect class="c5 k" x="684.3" y="186.12" width="306.1"/><svg x="684.3" y="186.12" width="305.8" height="12.25"><text x="2.5" y="8.2">java/lang/Thread.run (28.9 mins)</text></svg>
<rect class="c8 k" x="991.9" y="186.12" width="279.3"/><svg x="991.9" y="186.12" width="279" height="12.25"><text x="2.5" y="8.2">libpthread-2.32.so.start_thread (26.3 mins)</text></svg>
<rect class="c3 k" x="1272.3" y="186.12" width="7.7"/>
<rect class="c5 k" x="684.3" y="198.73" width="5.7"/>
<rect class="c7 k" x="691.2" y="198.73" width="19.5"/><svg x="691.2" y="198.73" width="19.2" height="12.25"><text x="2.5" y="8.2">io/netty/channel/nio</text></svg>
<rect class="cb k" x="711.8" y="198.73" width="179.9"/><svg x="711.8" y="198.73" width="179.6" height="12.25"><text x="2.5" y="8.2">java/util/concurrent/ThreadPoolExecutor$Worker.run</text></svg>
<rect class="c14 k" x="894.5" y="198.73" width="43.7"/><svg x="894.5" y="198.73" width="43.4" height="12.25"><text x="2.5" y="8.2">kafka/network/Processor.run</text></svg>
<rect class="cf k" x="939.4" y="198.73" width="44.6"/><svg x="939.4" y="198.73" width="44.3" height="12.25"><text x="2.5" y="8.2">kafka/server/KafkaRequestHandler.run</text></svg>
<rect class="c15 k" x="985.8" y="198.73" width="4.6"/>
<rect class="c4 k" x="991.9" y="198.73" width="278.6"/><svg x="991.9" y="198.73" width="278.3" height="12.25"><text x="2.5" y="8.2">libjvm.so.thread_native_entry (26.3 mins)</text></svg>
<rect class="c12 k" x="684.3" y="211.35" width="5.7"/>
<rect class="cb k" x="691.2" y="211.35" width="19.5"/><svg x="691.2" y="211.35" width="19.2" height="12.25"><text x="2.5" y="8.2">io/netty/channel/nio</text></svg>
<rect class="c3 k" x="711.8" y="211.35" width="179.9"/><svg x="711.8" y="211.35" width="179.6" height="12.25"><text x="2.5" y="8.2">java/util/concurrent/ThreadPoolExecutor.runWorker</text></svg>
<rect class="c14 k" x="894.5" y="211.35" width="29.2"/><svg x="894.5" y="211.35" width="28.9" height="12.25"><text x="2.5" y="8.2">kafka/network</text></svg>
<rect class="c14 k" x="929.2" y="211.35" width="8"/>
<rect class="cf k" x="945.8" y="211.35" width="37.8"/><svg x="945.8" y="211.35" width="37.5" height="12.25"><text x="2.5" y="8.2">kafka/server/KafkaRequestHandler</text></svg>
<rect class="c15 k" x="985.8" y="211.35" width="4.6"/>
<rect class="c4 k" x="991.9" y="211.35" width="278.6"/><svg x="991.9" y="211.35" width="278.3" height="12.25"><text x="2.5" y="8.2">libjvm.so.Thread::call_run (26.3 mins)</text></svg>
<rect class="c8 k" x="684.3" y="223.97" width="5.7"/>
<rect class="cd k" x="691.2" y="223.97" width="19.5"/><svg x="691.2" y="223.97" width="19.2" height="12.25"><text x="2.5" y="8.2">io/netty/channel/nio</text></svg>
<rect class="c4 k" x="714.8" y="223.97" width="116.3"/><svg x="714.8" y="223.97" width="116" height="12.25"><text x="2.5" y="8.2">java/util/concurrent/FutureTask.run</text></svg>
<rect class="cf k" x="831.9" y="223.97" width="18"/><svg x="831.9" y="223.97" width="17.7" height="12.25"><text x="2.5" y="8.2">java/util</text></svg>
<rect class="c3 k" x="852.2" y="223.97" width="23.4"/><svg x="852.2" y="223.97" width="23.1" height="12.25"><text x="2.5" y="8.2">java/util</text></svg>
<rect class="c8 k" x="879" y="223.97" width="12.7"/><svg x="879" y="223.97" width="12.4" height="12.25"><text x="2.5" y="8.2">sun/nio</text></svg>
<rect class="c12 k" x="894.5" y="223.97" width="29.2"/><svg x="894.5" y="223.97" width="28.9" height="12.25"><text x="2.5" y="8.2">org/apache/kafka</text></svg>
<rect class="cf k" x="929.2" y="223.97" width="8"/>
<rect class="c13 k" x="945.8" y="223.97" width="37"/><svg x="945.8" y="223.97" width="36.7" height="12.25"><text x="2.5" y="8.2">kafka/server/KafkaApis</text></svg>
<rect class="c4 k" x="991.9" y="223.97" width="209.1"/><svg x="991.9" y="223.97" width="208.8" height="12.25"><text x="2.5" y="8.2">libjvm.so..annobin__ZN19WorkGangBarrierSyncC2Ev.start</text></svg>
<rect class="cb k" x="1203.6" y="223.97" width="66.2"/><svg x="1203.6" y="223.97" width="65.9" height="12.25"><text x="2.5" y="8.2">libjvm.so.JavaThread::run</text></svg>
<rect class="cc k" x="694.1" y="236.59" width="16.4"/><svg x="694.1" y="236.59" width="16.1" height="12.25"><text x="2.5" y="8.2">io/netty/channel/nio</text></svg>
<rect class="cd k" x="714.8" y="236.59" width="115.5"/><svg x="714.8" y="236.59" width="115.2" height="12.25"><text x="2.5" y="8.2">java/util/concurrent/Executors$RunnableAdapter.call</text></svg>
<rect class="c4 k" x="836.1" y="236.59" width="13.8"/><svg x="836.1" y="236.59" width="13.5" height="12.25"><text x="2.5" y="8.2">java/util</text></svg>
<rect class="c15 k" x="852.2" y="236.59" width="13.7"/><svg x="852.2" y="236.59" width="13.4" height="12.25"><text x="2.5" y="8.2">java/util</text></svg>
<rect class="cf k" x="866.3" y="236.59" width="8.4"/>
<rect class="c10 k" x="879" y="236.59" width="12.7"/><svg x="879" y="236.59" width="12.4" height="12.25"><text x="2.5" y="8.2">com/sun</text></svg>
<rect class="c12 k" x="896.5" y="236.59" width="18.7"/><svg x="896.5" y="236.59" width="18.4" height="12.25"><text x="2.5" y="8.2">org/apache</text></svg>
<rect class="c12 k" x="915.5" y="236.59" width="8.2"/>
<rect class="c11 k" x="929.2" y="236.59" width="8"/>
<rect class="cf k" x="956.6" y="236.59" width="25.7"/><svg x="956.6" y="236.59" width="25.4" height="12.25"><text x="2.5" y="8.2">kafka/server</text></svg>
<rect class="c9 k" x="991.9" y="236.59" width="209.1"/><svg x="991.9" y="236.59" width="208.8" height="12.25"><text x="2.5" y="8.2">libjvm.so.GangWorker::loop (19.7 mins)</text></svg>
<rect class="c11 k" x="1203.6" y="236.59" width="65.2"/><svg x="1203.6" y="236.59" width="64.9" height="12.25"><text x="2.5" y="8.2">libjvm.so.CompileBroker</text></svg>
<rect class="c10 k" x="694.1" y="249.2" width="16.4"/><svg x="694.1" y="249.2" width="16.1" height="12.25"><text x="2.5" y="8.2">io/netty/channel/nio</text></svg>
<rect class="c18 k" x="714.8" y="249.2" width="58.1"/><svg x="714.8" y="249.2" width="57.8" height="12.25"><text x="2.5" y="8.2">com/automq/stream/s3</text></svg>
<rect class="c13 k" x="774" y="249.2" width="19.4"/><svg x="774" y="249.2" width="19.1" height="12.25"><text x="2.5" y="8.2">kafka/log</text></svg>
<rect class="c15 k" x="794.4" y="249.2" width="24.5"/><svg x="794.4" y="249.2" width="24.2" height="12.25"><text x="2.5" y="8.2">kafka/log/streamaspect</text></svg>
<rect class="c6 k" x="819.5" y="249.2" width="10.8"/>
<rect class="cd k" x="836.1" y="249.2" width="13.8"/><svg x="836.1" y="249.2" width="13.5" height="12.25"><text x="2.5" y="8.2">java/util</text></svg>
<rect class="c4 k" x="852.2" y="249.2" width="13.7"/><svg x="852.2" y="249.2" width="13.4" height="12.25"><text x="2.5" y="8.2">java/util</text></svg>
<rect class="cf k" x="866.3" y="249.2" width="8.4"/>
<rect class="cf k" x="879" y="249.2" width="12.7"/><svg x="879" y="249.2" width="12.4" height="12.25"><text x="2.5" y="8.2">sun/nio</text></svg>
<rect class="c12 k" x="899.7" y="249.2" width="6.3"/>
<rect class="c12 k" x="907" y="249.2" width="8"/>
<rect class="cd k" x="916.1" y="249.2" width="7.6"/>
<rect class="c14 k" x="929.2" y="249.2" width="8"/>
<rect class="cf k" x="957.2" y="249.2" width="25.1"/><svg x="957.2" y="249.2" width="24.8" height="12.25"><text x="2.5" y="8.2">kafka/server</text></svg>
<rect class="c4 k" x="991.9" y="249.2" width="209.1"/><svg x="991.9" y="249.2" width="208.8" height="12.25"><text x="2.5" y="8.2">libjvm.so..annobin__ZN5ZTask8GangTask4workEj.start</text></svg>
<rect class="c11 k" x="1203.6" y="249.2" width="65.2"/><svg x="1203.6" y="249.2" width="64.9" height="12.25"><text x="2.5" y="8.2">libjvm.so.CompileBroker</text></svg>
<rect class="c10 k" x="694.1" y="261.82" width="16.4"/><svg x="694.1" y="261.82" width="16.1" height="12.25"><text x="2.5" y="8.2">io/netty/channel/nio</text></svg>
<rect class="c12 k" x="715.5" y="261.82" width="6.1"/>
<rect class="c18 k" x="723.8" y="261.82" width="49.1"/><svg x="723.8" y="261.82" width="48.8" height="12.25"><text x="2.5" y="8.2">com/automq/stream</text></svg>
<rect class="c10 k" x="774" y="261.82" width="19.4"/><svg x="774" y="261.82" width="19.1" height="12.25"><text x="2.5" y="8.2">kafka/log</text></svg>
<rect class="cb k" x="794.4" y="261.82" width="24.1"/><svg x="794.4" y="261.82" width="23.8" height="12.25"><text x="2.5" y="8.2">kafka/log/streamaspect</text></svg>
<rect class="ce k" x="819.5" y="261.82" width="10.8"/>
<rect class="c11 k" x="842.6" y="261.82" width="7.2"/>
<rect class="c3 k" x="852.2" y="261.82" width="12.5"/><svg x="852.2" y="261.82" width="12.2" height="12.25"><text x="2.5" y="8.2">java/util</text></svg>
<rect class="c4 k" x="866.8" y="261.82" width="7.8"/>
<rect class="c10 k" x="879" y="261.82" width="12.7"/><svg x="879" y="261.82" width="12.4" height="12.25"><text x="2.5" y="8.2">com/sun</text></svg>
<rect class="ce k" x="899.7" y="261.82" width="6.3"/>
<rect class="c12 k" x="907" y="261.82" width="8"/>
<rect class="cd k" x="916.1" y="261.82" width="7.6"/>
<rect class="c14 k" x="929.2" y="261.82" width="8"/>
<rect class="cd k" x="958.2" y="261.82" width="23.2"/><svg x="958.2" y="261.82" width="22.9" height="12.25"><text x="2.5" y="8.2">kafka/server</text></svg>
<rect class="c8 k" x="998.4" y="261.82" width="171.7"/><svg x="998.4" y="261.82" width="171.4" height="12.25"><text x="2.5" y="8.2">libjvm.so.ZMark::work (16.2 mins)</text></svg>
<rect class="c12 k" x="1171.1" y="261.82" width="26.5"/><svg x="1171.1" y="261.82" width="26.2" height="12.25"><text x="2.5" y="8.2">libjvm.so</text></svg>
<rect class="c18 k" x="1203.6" y="261.82" width="58.8"/><svg x="1203.6" y="261.82" width="58.5" height="12.25"><text x="2.5" y="8.2">libjvm.so.C2Compiler</text></svg>
<rect class="cd k" x="1262.8" y="261.82" width="6"/>
<rect class="c18 k" x="696" y="274.44" width="14.2"/><svg x="696" y="274.44" width="13.9" height="12.25"><text x="2.5" y="8.2">software/amazon/awssdk</text></svg>
<rect class="c11 k" x="715.5" y="274.44" width="6.1"/>
<rect class="c9 k" x="725.2" y="274.44" width="28.6"/><svg x="725.2" y="274.44" width="28.3" height="12.25"><text x="2.5" y="8.2">com/automq/stream</text></svg>
<rect class="c8 k" x="754.7" y="274.44" width="18.2"/><svg x="754.7" y="274.44" width="17.9" height="12.25"><text x="2.5" y="8.2">com/automq</text></svg>
<rect class="cf k" x="774.8" y="274.44" width="18.6"/><svg x="774.8" y="274.44" width="18.3" height="12.25"><text x="2.5" y="8.2">scala/collection</text></svg>
<rect class="c15 k" x="794.4" y="274.44" width="5.7"/>
<rect class="ce k" x="801.5" y="274.44" width="16"/><svg x="801.5" y="274.44" width="15.7" height="12.25"><text x="2.5" y="8.2">kafka/log</text></svg>
<rect class="c11 k" x="842.6" y="274.44" width="7.2"/>
<rect class="c3 k" x="852.2" y="274.44" width="12.5"/><svg x="852.2" y="274.44" width="12.2" height="12.25"><text x="2.5" y="8.2">java/util</text></svg>
<rect class="cc k" x="866.8" y="274.44" width="7.8"/>
<rect class="c10 k" x="879" y="274.44" width="12.7"/><svg x="879" y="274.44" width="12.4" height="12.25"><text x="2.5" y="8.2">sun/nio</text></svg>
<rect class="ce k" x="899.7" y="274.44" width="6.3"/>
<rect class="ce k" x="907.4" y="274.44" width="6.8"/>
<rect class="c9 k" x="916.1" y="274.44" width="7.1"/>
<rect class="c14 k" x="929.2" y="274.44" width="8"/>
<rect class="cd k" x="958.2" y="274.44" width="22.6"/><svg x="958.2" y="274.44" width="22.3" height="12.25"><text x="2.5" y="8.2">kafka/server</text></svg>
<rect class="c8 k" x="999.4" y="274.44" width="171"/><svg x="999.4" y="274.44" width="170.7" height="12.25"><text x="2.5" y="8.2">libjvm.so.ZMark::work_without_timeout (16.2 mins)</text></svg>
<rect class="c16 k" x="1172.5" y="274.44" width="24.5"/><svg x="1172.5" y="274.44" width="24.2" height="12.25"><text x="2.5" y="8.2">libjvm.so</text></svg>
<rect class="c8 k" x="1203.6" y="274.44" width="58.8"/><svg x="1203.6" y="274.44" width="58.5" height="12.25"><text x="2.5" y="8.2">libjvm.so.Compile::Compile</text></svg>
<rect class="c4 k" x="1262.8" y="274.44" width="5.8"/>
<rect class="ca k" x="696" y="287.05" width="14.2"/><svg x="696" y="287.05" width="13.9" height="12.25"><text x="2.5" y="8.2">software/amazon/awssdk</text></svg>
<rect class="c4 k" x="715.5" y="287.05" width="5.7"/>
<rect class="cb k" x="726.2" y="287.05" width="15.6"/><svg x="726.2" y="287.05" width="15.3" height="12.25"><text x="2.5" y="8.2">com/automq</text></svg>
<rect class="cf k" x="742.6" y="287.05" width="10.2"/>
<rect class="cf k" x="754.9" y="287.05" width="17.7"/><svg x="754.9" y="287.05" width="17.4" height="12.25"><text x="2.5" y="8.2">java/util</text></svg>
<rect class="c16 k" x="774.8" y="287.05" width="18.6"/><svg x="774.8" y="287.05" width="18.3" height="12.25"><text x="2.5" y="8.2">kafka/log</text></svg>
<rect class="cf k" x="794.4" y="287.05" width="5.7"/>
<rect class="ce k" x="801.5" y="287.05" width="15.1"/><svg x="801.5" y="287.05" width="14.8" height="12.25"><text x="2.5" y="8.2">kafka/log</text></svg>
<rect class="cf k" x="843.2" y="287.05" width="6"/>
<rect class="c17 k" x="852.2" y="287.05" width="12.5"/><svg x="852.2" y="287.05" width="12.2" height="12.25"><text x="2.5" y="8.2">java/util</text></svg>
<rect class="c8 k" x="867.2" y="287.05" width="7.2"/>
<rect class="c10 k" x="879" y="287.05" width="12.7"/><svg x="879" y="287.05" width="12.4" height="12.25"><text x="2.5" y="8.2">com/sun</text></svg>
<rect class="c7 k" x="899.7" y="287.05" width="6.3"/>
<rect class="c14 k" x="907.4" y="287.05" width="6.8"/>
<rect class="c14 k" x="929.2" y="287.05" width="8"/>
<rect class="ce k" x="960.6" y="287.05" width="18.8"/><svg x="960.6" y="287.05" width="18.5" height="12.25"><text x="2.5" y="8.2">kafka/server</text></svg>
<rect class="c4 k" x="1000.4" y="287.05" width="13.6"/><svg x="1000.4" y="287.05" width="13.3" height="12.25"><text x="2.5" y="8.2">libjvm.so</text></svg>
<rect class="c8 k" x="1018.4" y="287.05" width="83.9"/><svg x="1018.4" y="287.05" width="83.6" height="12.25"><text x="2.5" y="8.2">libjvm.so.ZMark::follow_object</text></svg>
<rect class="c8 k" x="1102.9" y="287.05" width="64"/><svg x="1102.9" y="287.05" width="63.7" height="12.25"><text x="2.5" y="8.2">libjvm.so.ZMark::mark_and_follow</text></svg>
<rect class="ca k" x="1173.5" y="287.05" width="15.4"/><svg x="1173.5" y="287.05" width="15.1" height="12.25"><text x="2.5" y="8.2">libjvm</text></svg>
<rect class="c4 k" x="1262.8" y="287.05" width="5.8"/>
<rect class="c8 k" x="1203.6" y="287.05" width="30.1"/><svg x="1203.6" y="287.05" width="29.8" height="12.25"><text x="2.5" y="8.2">libjvm.so</text></svg>
<rect class="c8 k" x="1234.3" y="287.05" width="18.4"/><svg x="1234.3" y="287.05" width="18.1" height="12.25"><text x="2.5" y="8.2">libjvm</text></svg>
<rect class="cf k" x="1254.3" y="287.05" width="7.5"/>
<rect class="c18 k" x="696" y="299.67" width="14.2"/><svg x="696" y="299.67" width="13.9" height="12.25"><text x="2.5" y="8.2">software/amazon/awssdk</text></svg>
<rect class="c4 k" x="715.5" y="299.67" width="5.7"/>
<rect class="c13 k" x="726.2" y="299.67" width="15.6"/><svg x="726.2" y="299.67" width="15.3" height="12.25"><text x="2.5" y="8.2">com/automq</text></svg>
<rect class="cf k" x="742.6" y="299.67" width="10.2"/>
<rect class="cf k" x="754.9" y="299.67" width="17.7"/><svg x="754.9" y="299.67" width="17.4" height="12.25"><text x="2.5" y="8.2">java/util</text></svg>
<rect class="c10 k" x="774.8" y="299.67" width="18.6"/><svg x="774.8" y="299.67" width="18.3" height="12.25"><text x="2.5" y="8.2">kafka/log</text></svg>
<rect class="cf k" x="794.4" y="299.67" width="5.7"/>
<rect class="ce k" x="803.4" y="299.67" width="12.2"/><svg x="803.4" y="299.67" width="11.9" height="12.25"><text x="2.5" y="8.2">kafka/log</text></svg>
<rect class="c12 k" x="843.2" y="299.67" width="6"/>
<rect class="cc k" x="852.2" y="299.67" width="12.5"/><svg x="852.2" y="299.67" width="12.2" height="12.25"><text x="2.5" y="8.2">java/util</text></svg>
<rect class="c18 k" x="879" y="299.67" width="12.7"/><svg x="879" y="299.67" width="12.4" height="12.25"><text x="2.5" y="8.2">io/netty</text></svg>
<rect class="ca k" x="929.2" y="299.67" width="8"/>
<rect class="c3 k" x="960.6" y="299.67" width="18.7"/><svg x="960.6" y="299.67" width="18.4" height="12.25"><text x="2.5" y="8.2">scala/collection</text></svg>
<rect class="cb k" x="1000.4" y="299.67" width="8"/>
<rect class="cf k" x="1025.5" y="299.67" width="71.2"/><svg x="1025.5" y="299.67" width="70.9" height="12.25"><text x="2.5" y="8.2">libjvm.so.void OopOopIterateDispatch</text></svg>
<rect class="ca k" x="1173" y="299.67" width="14.5"/><svg x="1173" y="299.67" width="14.2" height="12.25"><text x="2.5" y="8.2">libjvm</text></svg>
<rect class="c4 k" x="1262.8" y="299.67" width="5.8"/>
<rect class="c5 k" x="1211.2" y="299.67" width="18.5"/><svg x="1211.2" y="299.67" width="18.2" height="12.25"><text x="2.5" y="8.2">libjvm</text></svg>
<rect class="c13 k" x="1238.3" y="299.67" width="9.1"/>
<rect class="c18 k" x="1254.3" y="299.67" width="7.1"/>
<rect class="ca k" x="696" y="312.29" width="14.2"/><svg x="696" y="312.29" width="13.9" height="12.25"><text x="2.5" y="8.2">software/amazon/awssdk</text></svg>
<rect class="cb k" x="726.2" y="312.29" width="15.6"/><svg x="726.2" y="312.29" width="15.3" height="12.25"><text x="2.5" y="8.2">com/automq</text></svg>
<rect class="ca k" x="742.6" y="312.29" width="10.2"/>
<rect class="c16 k" x="756" y="312.29" width="16.6"/><svg x="756" y="312.29" width="16.3" height="12.25"><text x="2.5" y="8.2">java/util</text></svg>
<rect class="c10 k" x="774.8" y="312.29" width="18.6"/><svg x="774.8" y="312.29" width="18.3" height="12.25"><text x="2.5" y="8.2">kafka/log</text></svg>
<rect class="cf k" x="794.4" y="312.29" width="5.7"/>
<rect class="cb k" x="803.4" y="312.29" width="11.6"/><svg x="803.4" y="312.29" width="11.3" height="12.25"><text x="2.5" y="8.2">kafka/log</text></svg>
<rect class="cd k" x="843.2" y="312.29" width="6"/>
<rect class="c8 k" x="851.6" y="312.29" width="12.2"/><svg x="851.6" y="312.29" width="11.9" height="12.25"><text x="2.5" y="8.2">jdk/internal</text></svg>
<rect class="c17 k" x="878.8" y="312.29" width="9.9"/>
<rect class="c14 k" x="929.2" y="312.29" width="8"/>
<rect class="c10 k" x="960.6" y="312.29" width="18.7"/><svg x="960.6" y="312.29" width="18.4" height="12.25"><text x="2.5" y="8.2">scala/collection</text></svg>
<rect class="cb k" x="1027" y="312.29" width="39.8"/><svg x="1027" y="312.29" width="39.5" height="12.25"><text x="2.5" y="8.2">libjvm.so.ZBarrier</text></svg>
<rect class="c13 k" x="1238.3" y="312.29" width="9.1"/>
<rect class="c18 k" x="1254.3" y="312.29" width="7.1"/>
<rect class="c6 k" x="696" y="324.9" width="14.2"/><svg x="696" y="324.9" width="13.9" height="12.25"><text x="2.5" y="8.2">software/amazon/awssdk</text></svg>
<rect class="c6 k" x="727.8" y="324.9" width="12.8"/><svg x="727.8" y="324.9" width="12.5" height="12.25"><text x="2.5" y="8.2">com/automq</text></svg>
<rect class="ca k" x="744.2" y="324.9" width="6.5"/>
<rect class="cf k" x="754.9" y="324.9" width="17.4"/><svg x="754.9" y="324.9" width="17.1" height="12.25"><text x="2.5" y="8.2">java/util</text></svg>
<rect class="c15 k" x="774.8" y="324.9" width="18.6"/><svg x="774.8" y="324.9" width="18.3" height="12.25"><text x="2.5" y="8.2">kafka/log</text></svg>
<rect class="cb k" x="803.4" y="324.9" width="11.2"/><svg x="803.4" y="324.9" width="10.9" height="12.25"><text x="2.5" y="8.2">kafka/log</text></svg>
<rect class="c3 k" x="843.2" y="324.9" width="6"/>
<rect class="c13 k" x="851.6" y="324.9" width="7.2"/>
<rect class="c11 k" x="878.8" y="324.9" width="9.9"/>
<rect class="c14 k" x="929.2" y="324.9" width="8"/>
<rect class="c10 k" x="960.6" y="324.9" width="18.7"/><svg x="960.6" y="324.9" width="18.4" height="12.25"><text x="2.5" y="8.2">scala/collection</text></svg>
<rect class="c18 k" x="1254.3" y="324.9" width="7.1"/>
<rect class="c12 k" x="696" y="337.52" width="14"/><svg x="696" y="337.52" width="13.7" height="12.25"><text x="2.5" y="8.2">io/netty/channel/nio</text></svg>
<rect class="c11 k" x="728.2" y="337.52" width="11.7"/><svg x="728.2" y="337.52" width="11.4" height="12.25"><text x="2.5" y="8.2">com/automq</text></svg>
<rect class="c3 k" x="744.2" y="337.52" width="6.5"/>
<rect class="c16 k" x="755.3" y="337.52" width="14.7"/><svg x="755.3" y="337.52" width="14.4" height="12.25"><text x="2.5" y="8.2">com/automq</text></svg>
<rect class="c12 k" x="774.8" y="337.52" width="18.6"/><svg x="774.8" y="337.52" width="18.3" height="12.25"><text x="2.5" y="8.2">kafka/log</text></svg>
<rect class="cb k" x="803.4" y="337.52" width="11.2"/><svg x="803.4" y="337.52" width="10.9" height="12.25"><text x="2.5" y="8.2">kafka/log</text></svg>
<rect class="c8 k" x="843.2" y="337.52" width="6"/>
<rect class="cf k" x="878.8" y="337.52" width="9.9"/>
<rect class="cf k" x="929.7" y="337.52" width="5.5"/>
<rect class="c9 k" x="960.6" y="337.52" width="18.2"/><svg x="960.6" y="337.52" width="17.9" height="12.25"><text x="2.5" y="8.2">kafka/log</text></svg>
<rect class="c18 k" x="1254.3" y="337.52" width="7.1"/>
<rect class="c12 k" x="696" y="350.14" width="14"/><svg x="696" y="350.14" width="13.7" height="12.25"><text x="2.5" y="8.2">io/netty/channel/nio</text></svg>
<rect class="c11 k" x="728.2" y="350.14" width="11.7"/><svg x="728.2" y="350.14" width="11.4" height="12.25"><text x="2.5" y="8.2">com/automq</text></svg>
<rect class="c18 k" x="744.2" y="350.14" width="6.5"/>
<rect class="cf k" x="755.3" y="350.14" width="14.7"/><svg x="755.3" y="350.14" width="14.4" height="12.25"><text x="2.5" y="8.2">com/automq</text></svg>
<rect class="cf k" x="774.8" y="350.14" width="18.6"/><svg x="774.8" y="350.14" width="18.3" height="12.25"><text x="2.5" y="8.2">scala/collection</text></svg>
<rect class="cb k" x="803.4" y="350.14" width="11.2"/><svg x="803.4" y="350.14" width="10.9" height="12.25"><text x="2.5" y="8.2">kafka/log</text></svg>
<rect class="ce k" x="843.2" y="350.14" width="6"/>
<rect class="c12 k" x="878.8" y="350.14" width="9.9"/>
<rect class="ce k" x="960.6" y="350.14" width="18.2"/><svg x="960.6" y="350.14" width="17.9" height="12.25"><text x="2.5" y="8.2">kafka/log</text></svg>
<rect class="c12 k" x="696" y="362.75" width="14"/><svg x="696" y="362.75" width="13.7" height="12.25"><text x="2.5" y="8.2">io/netty/channel/nio</text></svg>
<rect class="cf k" x="732.2" y="362.75" width="6.1"/>
<rect class="c16 k" x="744.2" y="362.75" width="6.5"/>
<rect class="cf k" x="755.3" y="362.75" width="14.7"/><svg x="755.3" y="362.75" width="14.4" height="12.25"><text x="2.5" y="8.2">com/automq</text></svg>
<rect class="c15 k" x="774.8" y="362.75" width="18.6"/><svg x="774.8" y="362.75" width="18.3" height="12.25"><text x="2.5" y="8.2">kafka/log</text></svg>
<rect class="c12 k" x="803.4" y="362.75" width="11.2"/><svg x="803.4" y="362.75" width="10.9" height="12.25"><text x="2.5" y="8.2">kafka/log</text></svg>
<rect class="c4 k" x="843.2" y="362.75" width="5.2"/>
<rect class="cd k" x="878.8" y="362.75" width="9.9"/>
<rect class="cb k" x="960.6" y="362.75" width="18.2"/><svg x="960.6" y="362.75" width="17.9" height="12.25"><text x="2.5" y="8.2">kafka/log</text></svg>
<rect class="c12 k" x="696" y="375.37" width="14"/><svg x="696" y="375.37" width="13.7" height="12.25"><text x="2.5" y="8.2">io/netty/channel/nio</text></svg>
<rect class="cf k" x="732.2" y="375.37" width="6.1"/>
<rect class="c16 k" x="744.2" y="375.37" width="6.5"/>
<rect class="c8 k" x="755.3" y="375.37" width="14.7"/><svg x="755.3" y="375.37" width="14.4" height="12.25"><text x="2.5" y="8.2">com/automq</text></svg>
<rect class="c12 k" x="774.8" y="375.37" width="18.6"/><svg x="774.8" y="375.37" width="18.3" height="12.25"><text x="2.5" y="8.2">kafka/log</text></svg>
<rect class="c10 k" x="803.4" y="375.37" width="11.2"/><svg x="803.4" y="375.37" width="10.9" height="12.25"><text x="2.5" y="8.2">kafka/log</text></svg>
<rect class="c3 k" x="878.8" y="375.37" width="9.9"/>
<rect class="cb k" x="960.6" y="375.37" width="17.4"/><svg x="960.6" y="375.37" width="17.1" height="12.25"><text x="2.5" y="8.2">kafka/log</text></svg>
<rect class="c3 k" x="696" y="387.99" width="14"/><svg x="696" y="387.99" width="13.7" height="12.25"><text x="2.5" y="8.2">io/netty/channel/nio</text></svg>
<rect class="c16 k" x="755.3" y="387.99" width="14.7"/><svg x="755.3" y="387.99" width="14.4" height="12.25"><text x="2.5" y="8.2">com/automq</text></svg>
<rect class="c12 k" x="774.8" y="387.99" width="18.6"/><svg x="774.8" y="387.99" width="18.3" height="12.25"><text x="2.5" y="8.2">kafka/log</text></svg>
<rect class="cb k" x="803.4" y="387.99" width="11.2"/><svg x="803.4" y="387.99" width="10.9" height="12.25"><text x="2.5" y="8.2">kafka/log</text></svg>
<rect class="c8 k" x="878.8" y="387.99" width="9.9"/>
<rect class="c12 k" x="960.6" y="387.99" width="17.4"/><svg x="960.6" y="387.99" width="17.1" height="12.25"><text x="2.5" y="8.2">kafka/log</text></svg>
<rect class="c12 k" x="696" y="400.61" width="14"/><svg x="696" y="400.61" width="13.7" height="12.25"><text x="2.5" y="8.2">io/netty/channel/nio</text></svg>
<rect class="cf k" x="755.3" y="400.61" width="14.7"/><svg x="755.3" y="400.61" width="14.4" height="12.25"><text x="2.5" y="8.2">com/automq</text></svg>
<rect class="cb k" x="774.8" y="400.61" width="18.6"/><svg x="774.8" y="400.61" width="18.3" height="12.25"><text x="2.5" y="8.2">kafka/log</text></svg>
<rect class="c16 k" x="803.4" y="400.61" width="11.2"/><svg x="803.4" y="400.61" width="10.9" height="12.25"><text x="2.5" y="8.2">kafka/log</text></svg>
<rect class="ce k" x="878.8" y="400.61" width="9.9"/>
<rect class="c12 k" x="960.6" y="400.61" width="17.4"/><svg x="960.6" y="400.61" width="17.1" height="12.25"><text x="2.5" y="8.2">kafka/log</text></svg>
<rect class="c12 k" x="696" y="413.22" width="14"/><svg x="696" y="413.22" width="13.7" height="12.25"><text x="2.5" y="8.2">io/netty/channel/nio</text></svg>
<rect class="cf k" x="755.3" y="413.22" width="14.7"/><svg x="755.3" y="413.22" width="14.4" height="12.25"><text x="2.5" y="8.2">com/automq</text></svg>
<rect class="cb k" x="774.8" y="413.22" width="18.6"/><svg x="774.8" y="413.22" width="18.3" height="12.25"><text x="2.5" y="8.2">kafka/log</text></svg>
<rect class="c10 k" x="803.4" y="413.22" width="11.2"/><svg x="803.4" y="413.22" width="10.9" height="12.25"><text x="2.5" y="8.2">kafka/log</text></svg>
<rect class="c4 k" x="878.8" y="413.22" width="9"/>
<rect class="c12 k" x="961.2" y="413.22" width="16.4"/><svg x="961.2" y="413.22" width="16.1" height="12.25"><text x="2.5" y="8.2">kafka/log</text></svg>
<rect class="c12 k" x="696" y="425.84" width="14"/><svg x="696" y="425.84" width="13.7" height="12.25"><text x="2.5" y="8.2">io/netty/channel/nio</text></svg>
<rect class="cf k" x="760.3" y="425.84" width="9.1"/>
<rect class="cb k" x="774.8" y="425.84" width="18.6"/><svg x="774.8" y="425.84" width="18.3" height="12.25"><text x="2.5" y="8.2">kafka/log</text></svg>
<rect class="c6 k" x="803.4" y="425.84" width="11.2"/><svg x="803.4" y="425.84" width="10.9" height="12.25"><text x="2.5" y="8.2">kafka/log</text></svg>
<rect class="cc k" x="878.8" y="425.84" width="8.4"/>
<rect class="c12 k" x="962.6" y="425.84" width="15.1"/><svg x="962.6" y="425.84" width="14.8" height="12.25"><text x="2.5" y="8.2">kafka/log</text></svg>
<rect class="cb k" x="696" y="438.46" width="14"/><svg x="696" y="438.46" width="13.7" height="12.25"><text x="2.5" y="8.2">io/netty/channel/nio</text></svg>
<rect class="cf k" x="760.3" y="438.46" width="9.1"/>
<rect class="cb k" x="774.8" y="438.46" width="18.6"/><svg x="774.8" y="438.46" width="18.3" height="12.25"><text x="2.5" y="8.2">kafka/log</text></svg>
<rect class="cb k" x="803.4" y="438.46" width="11.2"/><svg x="803.4" y="438.46" width="10.9" height="12.25"><text x="2.5" y="8.2">kafka/log</text></svg>
<rect class="c12 k" x="878.8" y="438.46" width="8.3"/>
<rect class="c4 k" x="962.6" y="438.46" width="15.1"/><svg x="962.6" y="438.46" width="14.8" height="12.25"><text x="2.5" y="8.2">kafka/log</text></svg>
<rect class="c12 k" x="696" y="451.07" width="14"/><svg x="696" y="451.07" width="13.7" height="12.25"><text x="2.5" y="8.2">io/netty/channel/nio</text></svg>
<rect class="c4 k" x="775.4" y="451.07" width="18"/><svg x="775.4" y="451.07" width="17.7" height="12.25"><text x="2.5" y="8.2">kafka/log</text></svg>
<rect class="c4 k" x="803.4" y="451.07" width="10.8"/>
<rect class="c15 k" x="878.8" y="451.07" width="8.3"/>
<rect class="c9 k" x="962.6" y="451.07" width="15.1"/><svg x="962.6" y="451.07" width="14.8" height="12.25"><text x="2.5" y="8.2">kafka/log</text></svg>
<rect class="c12 k" x="696" y="463.69" width="14"/><svg x="696" y="463.69" width="13.7" height="12.25"><text x="2.5" y="8.2">io/netty/channel/nio</text></svg>
<rect class="cb k" x="775.4" y="463.69" width="18"/><svg x="775.4" y="463.69" width="17.7" height="12.25"><text x="2.5" y="8.2">kafka/log</text></svg>
<rect class="c10 k" x="803.4" y="463.69" width="10.8"/>
<rect class="c15 k" x="878.8" y="463.69" width="8.3"/>
<rect class="c12 k" x="962.6" y="463.69" width="15.1"/><svg x="962.6" y="463.69" width="14.8" height="12.25"><text x="2.5" y="8.2">kafka/log</text></svg>
<rect class="c12 k" x="696" y="476.31" width="14"/><svg x="696" y="476.31" width="13.7" height="12.25"><text x="2.5" y="8.2">io/netty/channel/nio</text></svg>
<rect class="ca k" x="775.4" y="476.31" width="17.6"/><svg x="775.4" y="476.31" width="17.3" height="12.25"><text x="2.5" y="8.2">kafka/log</text></svg>
<rect class="cb k" x="803.4" y="476.31" width="10.8"/>
<rect class="c15 k" x="878.8" y="476.31" width="8.3"/>
<rect class="c10 k" x="963.8" y="476.31" width="11.5"/><svg x="963.8" y="476.31" width="11.2" height="12.25"><text x="2.5" y="8.2">kafka</text></svg>
<rect class="c15 k" x="696" y="488.93" width="14"/><svg x="696" y="488.93" width="13.7" height="12.25"><text x="2.5" y="8.2">io/netty/channel/nio</text></svg>
<rect class="c8 k" x="775.4" y="488.93" width="17"/><svg x="775.4" y="488.93" width="16.7" height="12.25"><text x="2.5" y="8.2">kafka/log</text></svg>
<rect class="cb k" x="803.4" y="488.93" width="10.8"/>
<rect class="c15 k" x="878.8" y="488.93" width="8.3"/>
<rect class="c6 k" x="964.2" y="488.93" width="10.5"/>
<rect class="c16 k" x="696" y="501.54" width="14"/><svg x="696" y="501.54" width="13.7" height="12.25"><text x="2.5" y="8.2">io/netty/channel/nio</text></svg>
<rect class="c7 k" x="778.4" y="501.54" width="13"/><svg x="778.4" y="501.54" width="12.7" height="12.25"><text x="2.5" y="8.2">kafka</text></svg>
<rect class="cb k" x="806.5" y="501.54" width="7.6"/>
<rect class="c3 k" x="878.8" y="501.54" width="8.3"/>
<rect class="cb k" x="964.2" y="501.54" width="7.7"/>
<rect class="c15 k" x="696" y="514.16" width="14"/><svg x="696" y="514.16" width="13.7" height="12.25"><text x="2.5" y="8.2">io/netty/channel/nio</text></svg>
<rect class="c8 k" x="778.4" y="514.16" width="12.4"/><svg x="778.4" y="514.16" width="12.1" height="12.25"><text x="2.5" y="8.2">kafka</text></svg>
<rect class="ce k" x="806.5" y="514.16" width="7.6"/>
<rect class="c7 k" x="878.8" y="514.16" width="8.3"/>
<rect class="c4 k" x="964.2" y="514.16" width="7.7"/>
<rect class="c12 k" x="696" y="526.78" width="14"/><svg x="696" y="526.78" width="13.7" height="12.25"><text x="2.5" y="8.2">io/netty/channel/nio</text></svg>
<rect class="c7 k" x="778.4" y="526.78" width="12"/><svg x="778.4" y="526.78" width="11.7" height="12.25"><text x="2.5" y="8.2">kafka</text></svg>
<rect class="c6 k" x="806.5" y="526.78" width="7.6"/>
<rect class="cc k" x="878.8" y="526.78" width="8.3"/>
<rect class="c10 k" x="964.2" y="526.78" width="7.7"/>
<rect class="c12 k" x="696" y="539.39" width="14"/><svg x="696" y="539.39" width="13.7" height="12.25"><text x="2.5" y="8.2">io/netty/channel/nio</text></svg>
<rect class="c4 k" x="778.4" y="539.39" width="11.6"/>
<rect class="c6 k" x="806.5" y="539.39" width="7.6"/>
<rect class="c11 k" x="878.8" y="539.39" width="8.3"/>
<rect class="cb k" x="964.2" y="539.39" width="7.7"/>
<rect class="c12 k" x="696" y="552.01" width="14"/><svg x="696" y="552.01" width="13.7" height="12.25"><text x="2.5" y="8.2">io/netty/channel/nio</text></svg>
<rect class="cd k" x="778.4" y="552.01" width="11.6"/>
<rect class="c17 k" x="806.5" y="552.01" width="7.6"/>
<rect class="c8 k" x="879.1" y="552.01" width="7.6"/>
<rect class="ce k" x="964.2" y="552.01" width="7.7"/>
<rect class="c12 k" x="696" y="564.63" width="14"/><svg x="696" y="564.63" width="13.7" height="12.25"><text x="2.5" y="8.2">io/netty/channel/nio</text></svg>
<rect class="cd k" x="778.4" y="564.63" width="11.6"/>
<rect class="cb k" x="806.5" y="564.63" width="7.6"/>
<rect class="c8 k" x="879.1" y="564.63" width="7.6"/>
<rect class="c6 k" x="964.2" y="564.63" width="7.7"/>
<rect class="c12 k" x="696" y="577.24" width="14"/><svg x="696" y="577.24" width="13.7" height="12.25"><text x="2.5" y="8.2">io/netty/channel/nio</text></svg>
<rect class="cd k" x="778.4" y="577.24" width="11.6"/>
<rect class="cd k" x="879.1" y="577.24" width="7.6"/>
<rect class="c6 k" x="964.2" y="577.24" width="7.7"/>
<rect class="c17 k" x="700.2" y="589.86" width="9.2"/>
<rect class="c15 k" x="778.4" y="589.86" width="10"/>
<rect class="c6 k" x="879.1" y="589.86" width="7.6"/>
<rect class="c17 k" x="964.2" y="589.86" width="7.7"/>
<rect class="c17 k" x="702.6" y="602.48" width="6.8"/>
<rect class="cf k" x="778.4" y="602.48" width="10"/>
<rect class="cb k" x="879.1" y="602.48" width="7.6"/>
<rect class="cb k" x="964.2" y="602.48" width="7.7"/>
<rect class="c15 k" x="702.6" y="615.1" width="6.8"/>
<rect class="cf k" x="778.4" y="615.1" width="10"/>
<rect class="c18 k" x="879.1" y="615.1" width="7.6"/>
<rect class="c8 k" x="964.2" y="615.1" width="7.7"/>
<rect class="c16 k" x="702.6" y="627.71" width="6.4"/>
<rect class="cf k" x="778.4" y="627.71" width="10"/>
<rect class="cf k" x="879.1" y="627.71" width="7.6"/>
<rect class="cf k" x="964.2" y="627.71" width="7.7"/>
<rect class="c16 k" x="702.6" y="640.33" width="6.4"/>
<rect class="c6 k" x="879.1" y="640.33" width="7.6"/>
<rect class="cb k" x="964.2" y="640.33" width="7.7"/>
<rect class="c3 k" x="702.6" y="652.95" width="6.4"/>
<rect class="cb k" x="879.1" y="652.95" width="7.6"/>
<rect class="cb k" x="964.2" y="652.95" width="7.7"/>
<rect class="c3 k" x="702.6" y="665.56" width="6.4"/>
<rect class="c18 k" x="879.1" y="665.56" width="7.6"/>
<rect class="cf k" x="964.2" y="665.56" width="7.7"/>
</svg>
</div></body></html>
